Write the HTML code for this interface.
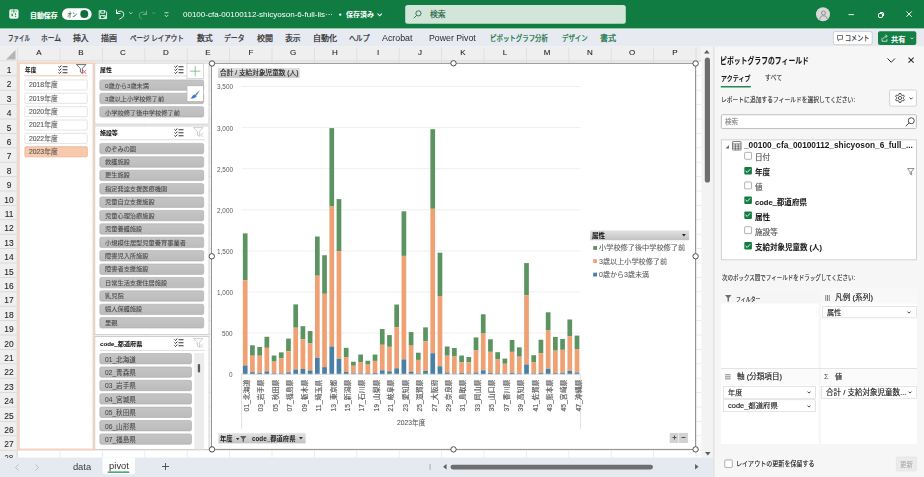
<!DOCTYPE html>
<html lang="ja"><head><meta charset="utf-8"><title>Excel - pivot</title>
<style>
html,body{margin:0;padding:0;background:#fff}
body{width:924px;height:477px;position:relative;overflow:hidden;font-family:"Liberation Sans",sans-serif}
#app{position:absolute;left:0;top:0;width:924px;height:477px;overflow:hidden;background:#fff}
.t{will-change:transform}
#app div{position:absolute;box-sizing:border-box}
#app svg{position:absolute;overflow:visible}
.t{white-space:nowrap}
.j{fill:currentColor;stroke:currentColor;stroke-width:4}
.jb{stroke-width:2}
.j text{font-family:"Liberation Sans","Noto Sans CJK JP",sans-serif}
.jb text{font-weight:bold}
</style></head><body>
<div id="app">
<svg id="shapes" style="left:0;top:0" width="924" height="477" viewBox="0 0 924 477"><defs><linearGradient id="lg0" x1="0" y1="0" x2="0" y2="1"><stop offset="0" stop-color="#C5C5C5"/><stop offset="1" stop-color="#BCBCBC"/></linearGradient><linearGradient id="lg1" x1="0" y1="0" x2="0" y2="1"><stop offset="0" stop-color="#E2E2E2"/><stop offset="1" stop-color="#C2C2C2"/></linearGradient></defs>
<rect x="0.00" y="0.00" width="924.00" height="28.70" fill="#107C41"/>
<rect x="62.00" y="8.20" width="29.60" height="11.90" rx="6.00" fill="#fff"/>
<rect x="80.30" y="10.10" width="8.00" height="8.00" rx="4.00" fill="#0E6F3A"/>
<rect x="339.00" y="13.40" width="2.40" height="2.40" rx="1.20" fill="#fff"/>
<rect x="405.20" y="5.00" width="220.60" height="18.80" rx="2.50" fill="#D2E5D9"/>
<rect x="816.00" y="7.30" width="14.00" height="14.00" rx="7.00" fill="#D9D9D9"/>
<rect x="848.50" y="14.20" width="5.50" height="0.90" fill="#fff"/>
<rect x="0.00" y="28.70" width="924.00" height="17.90" fill="#E7EAF1"/>
<rect x="0.00" y="28.80" width="924.00" height="0.90" fill="#E4F3EA"/>
<rect x="833.30" y="31.60" width="38.90" height="13.10" rx="1.70" fill="#fff" stroke="#b9b9b9" stroke-width="0.60"/>
<rect x="878.00" y="31.30" width="38.30" height="13.70" rx="2.00" fill="#137F44"/>
<rect x="0.00" y="46.60" width="701.50" height="14.80" fill="#EFEFEF"/>
<rect x="0.00" y="60.60" width="701.50" height="0.80" fill="#d0d0d0"/>
<rect x="0.00" y="61.40" width="17.60" height="396.10" fill="#EFEFEF"/>
<rect x="16.80" y="61.40" width="0.80" height="396.10" fill="#d0d0d0"/>
<rect x="17.20" y="47.60" width="0.80" height="13.80" fill="#dcdcdc"/>
<rect x="59.60" y="47.60" width="0.80" height="13.80" fill="#dcdcdc"/>
<rect x="102.00" y="47.60" width="0.80" height="13.80" fill="#dcdcdc"/>
<rect x="144.40" y="47.60" width="0.80" height="13.80" fill="#dcdcdc"/>
<rect x="186.80" y="47.60" width="0.80" height="13.80" fill="#dcdcdc"/>
<rect x="229.20" y="47.60" width="0.80" height="13.80" fill="#dcdcdc"/>
<rect x="271.60" y="47.60" width="0.80" height="13.80" fill="#dcdcdc"/>
<rect x="314.00" y="47.60" width="0.80" height="13.80" fill="#dcdcdc"/>
<rect x="356.40" y="47.60" width="0.80" height="13.80" fill="#dcdcdc"/>
<rect x="398.80" y="47.60" width="0.80" height="13.80" fill="#dcdcdc"/>
<rect x="441.20" y="47.60" width="0.80" height="13.80" fill="#dcdcdc"/>
<rect x="483.60" y="47.60" width="0.80" height="13.80" fill="#dcdcdc"/>
<rect x="526.00" y="47.60" width="0.80" height="13.80" fill="#dcdcdc"/>
<rect x="568.40" y="47.60" width="0.80" height="13.80" fill="#dcdcdc"/>
<rect x="610.80" y="47.60" width="0.80" height="13.80" fill="#dcdcdc"/>
<rect x="653.20" y="47.60" width="0.80" height="13.80" fill="#dcdcdc"/>
<rect x="695.60" y="47.60" width="0.80" height="13.80" fill="#d6d6d6"/>
<rect x="0.00" y="75.40" width="17.60" height="0.80" fill="#d6d6d6"/>
<rect x="0.00" y="89.80" width="17.60" height="0.80" fill="#d6d6d6"/>
<rect x="0.00" y="104.20" width="17.60" height="0.80" fill="#d6d6d6"/>
<rect x="0.00" y="118.60" width="17.60" height="0.80" fill="#d6d6d6"/>
<rect x="0.00" y="133.00" width="17.60" height="0.80" fill="#d6d6d6"/>
<rect x="0.00" y="147.40" width="17.60" height="0.80" fill="#d6d6d6"/>
<rect x="0.00" y="161.80" width="17.60" height="0.80" fill="#d6d6d6"/>
<rect x="0.00" y="176.20" width="17.60" height="0.80" fill="#d6d6d6"/>
<rect x="0.00" y="190.60" width="17.60" height="0.80" fill="#d6d6d6"/>
<rect x="0.00" y="205.00" width="17.60" height="0.80" fill="#d6d6d6"/>
<rect x="0.00" y="219.40" width="17.60" height="0.80" fill="#d6d6d6"/>
<rect x="0.00" y="233.80" width="17.60" height="0.80" fill="#d6d6d6"/>
<rect x="0.00" y="248.20" width="17.60" height="0.80" fill="#d6d6d6"/>
<rect x="0.00" y="262.60" width="17.60" height="0.80" fill="#d6d6d6"/>
<rect x="0.00" y="277.00" width="17.60" height="0.80" fill="#d6d6d6"/>
<rect x="0.00" y="291.40" width="17.60" height="0.80" fill="#d6d6d6"/>
<rect x="0.00" y="305.80" width="17.60" height="0.80" fill="#d6d6d6"/>
<rect x="0.00" y="320.20" width="17.60" height="0.80" fill="#d6d6d6"/>
<rect x="0.00" y="334.60" width="17.60" height="0.80" fill="#d6d6d6"/>
<rect x="0.00" y="349.00" width="17.60" height="0.80" fill="#d6d6d6"/>
<rect x="0.00" y="363.40" width="17.60" height="0.80" fill="#d6d6d6"/>
<rect x="0.00" y="377.80" width="17.60" height="0.80" fill="#d6d6d6"/>
<rect x="0.00" y="392.20" width="17.60" height="0.80" fill="#d6d6d6"/>
<rect x="0.00" y="406.60" width="17.60" height="0.80" fill="#d6d6d6"/>
<rect x="0.00" y="421.00" width="17.60" height="0.80" fill="#d6d6d6"/>
<rect x="0.00" y="435.40" width="17.60" height="0.80" fill="#d6d6d6"/>
<rect x="0.00" y="449.80" width="17.60" height="0.80" fill="#d6d6d6"/>
<rect x="0.00" y="464.20" width="17.60" height="0.80" fill="#d6d6d6"/>
<rect x="17.60" y="75.40" width="683.90" height="0.80" fill="#E8E8E8"/>
<rect x="17.60" y="89.80" width="683.90" height="0.80" fill="#E8E8E8"/>
<rect x="17.60" y="104.20" width="683.90" height="0.80" fill="#E8E8E8"/>
<rect x="17.60" y="118.60" width="683.90" height="0.80" fill="#E8E8E8"/>
<rect x="17.60" y="133.00" width="683.90" height="0.80" fill="#E8E8E8"/>
<rect x="17.60" y="147.40" width="683.90" height="0.80" fill="#E8E8E8"/>
<rect x="17.60" y="161.80" width="683.90" height="0.80" fill="#E8E8E8"/>
<rect x="17.60" y="176.20" width="683.90" height="0.80" fill="#E8E8E8"/>
<rect x="17.60" y="190.60" width="683.90" height="0.80" fill="#E8E8E8"/>
<rect x="17.60" y="205.00" width="683.90" height="0.80" fill="#E8E8E8"/>
<rect x="17.60" y="219.40" width="683.90" height="0.80" fill="#E8E8E8"/>
<rect x="17.60" y="233.80" width="683.90" height="0.80" fill="#E8E8E8"/>
<rect x="17.60" y="248.20" width="683.90" height="0.80" fill="#E8E8E8"/>
<rect x="17.60" y="262.60" width="683.90" height="0.80" fill="#E8E8E8"/>
<rect x="17.60" y="277.00" width="683.90" height="0.80" fill="#E8E8E8"/>
<rect x="17.60" y="291.40" width="683.90" height="0.80" fill="#E8E8E8"/>
<rect x="17.60" y="305.80" width="683.90" height="0.80" fill="#E8E8E8"/>
<rect x="17.60" y="320.20" width="683.90" height="0.80" fill="#E8E8E8"/>
<rect x="17.60" y="334.60" width="683.90" height="0.80" fill="#E8E8E8"/>
<rect x="17.60" y="349.00" width="683.90" height="0.80" fill="#E8E8E8"/>
<rect x="17.60" y="363.40" width="683.90" height="0.80" fill="#E8E8E8"/>
<rect x="17.60" y="377.80" width="683.90" height="0.80" fill="#E8E8E8"/>
<rect x="17.60" y="392.20" width="683.90" height="0.80" fill="#E8E8E8"/>
<rect x="17.60" y="406.60" width="683.90" height="0.80" fill="#E8E8E8"/>
<rect x="17.60" y="421.00" width="683.90" height="0.80" fill="#E8E8E8"/>
<rect x="17.60" y="435.40" width="683.90" height="0.80" fill="#E8E8E8"/>
<rect x="17.60" y="449.80" width="683.90" height="0.80" fill="#E8E8E8"/>
<rect x="59.60" y="61.40" width="0.80" height="396.10" fill="#E8E8E8"/>
<rect x="102.00" y="61.40" width="0.80" height="396.10" fill="#E8E8E8"/>
<rect x="144.40" y="61.40" width="0.80" height="396.10" fill="#E8E8E8"/>
<rect x="186.80" y="61.40" width="0.80" height="396.10" fill="#E8E8E8"/>
<rect x="229.20" y="61.40" width="0.80" height="396.10" fill="#E8E8E8"/>
<rect x="271.60" y="61.40" width="0.80" height="396.10" fill="#E8E8E8"/>
<rect x="314.00" y="61.40" width="0.80" height="396.10" fill="#E8E8E8"/>
<rect x="356.40" y="61.40" width="0.80" height="396.10" fill="#E8E8E8"/>
<rect x="398.80" y="61.40" width="0.80" height="396.10" fill="#E8E8E8"/>
<rect x="441.20" y="61.40" width="0.80" height="396.10" fill="#E8E8E8"/>
<rect x="483.60" y="61.40" width="0.80" height="396.10" fill="#E8E8E8"/>
<rect x="526.00" y="61.40" width="0.80" height="396.10" fill="#E8E8E8"/>
<rect x="568.40" y="61.40" width="0.80" height="396.10" fill="#E8E8E8"/>
<rect x="610.80" y="61.40" width="0.80" height="396.10" fill="#E8E8E8"/>
<rect x="653.20" y="61.40" width="0.80" height="396.10" fill="#E8E8E8"/>
<rect x="695.60" y="61.40" width="0.80" height="396.10" fill="#E8E8E8"/>
<rect x="18.75" y="63.15" width="74.70" height="386.30" fill="#fff" stroke="#F7D2BF" stroke-width="1.90"/>
<rect x="24.30" y="75.20" width="63.40" height="1.10" fill="#F5C6AC"/>
<rect x="24.90" y="79.90" width="62.40" height="10.10" rx="1.10" fill="#fff" stroke="#dedede" stroke-width="0.80"/>
<rect x="24.90" y="93.27" width="62.40" height="10.10" rx="1.10" fill="#fff" stroke="#dedede" stroke-width="0.80"/>
<rect x="24.90" y="106.64" width="62.40" height="10.10" rx="1.10" fill="#fff" stroke="#dedede" stroke-width="0.80"/>
<rect x="24.90" y="120.01" width="62.40" height="10.10" rx="1.10" fill="#fff" stroke="#dedede" stroke-width="0.80"/>
<rect x="24.90" y="133.38" width="62.40" height="10.10" rx="1.10" fill="#fff" stroke="#dedede" stroke-width="0.80"/>
<rect x="24.90" y="146.75" width="62.40" height="10.10" rx="1.10" fill="#F8C9AC" stroke="#EDB08C" stroke-width="0.80"/>
<rect x="94.75" y="63.05" width="114.30" height="61.10" fill="#fff" stroke="#c9c9c9" stroke-width="0.90"/>
<rect x="94.75" y="125.95" width="114.30" height="208.70" fill="#fff" stroke="#c9c9c9" stroke-width="0.90"/>
<rect x="94.75" y="336.45" width="114.30" height="113.10" fill="#fff" stroke="#c9c9c9" stroke-width="0.90"/>
<rect x="100.00" y="75.60" width="104.50" height="0.80" fill="#d4d4d4"/>
<rect x="99.80" y="79.90" width="103.90" height="10.40" rx="1.70" fill="url(#lg0)" stroke="#ababab" stroke-width="0.60"/>
<rect x="99.80" y="93.27" width="103.90" height="10.40" rx="1.70" fill="url(#lg0)" stroke="#ababab" stroke-width="0.60"/>
<rect x="99.80" y="106.64" width="103.90" height="10.40" rx="1.70" fill="url(#lg0)" stroke="#ababab" stroke-width="0.60"/>
<rect x="186.95" y="63.55" width="16.40" height="15.10" fill="#fff" stroke="#c9c9c9" stroke-width="0.70"/>
<rect x="186.95" y="85.75" width="16.40" height="15.90" fill="#fff" stroke="#b0b0b0" stroke-width="0.70"/>
<rect x="100.00" y="139.40" width="104.50" height="0.80" fill="#d4d4d4"/>
<rect x="99.80" y="143.40" width="103.90" height="10.40" rx="1.70" fill="url(#lg0)" stroke="#ababab" stroke-width="0.60"/>
<rect x="99.80" y="156.80" width="103.90" height="10.40" rx="1.70" fill="url(#lg0)" stroke="#ababab" stroke-width="0.60"/>
<rect x="99.80" y="170.20" width="103.90" height="10.40" rx="1.70" fill="url(#lg0)" stroke="#ababab" stroke-width="0.60"/>
<rect x="99.80" y="183.60" width="103.90" height="10.40" rx="1.70" fill="url(#lg0)" stroke="#ababab" stroke-width="0.60"/>
<rect x="99.80" y="197.00" width="103.90" height="10.40" rx="1.70" fill="url(#lg0)" stroke="#ababab" stroke-width="0.60"/>
<rect x="99.80" y="210.40" width="103.90" height="10.40" rx="1.70" fill="url(#lg0)" stroke="#ababab" stroke-width="0.60"/>
<rect x="99.80" y="223.80" width="103.90" height="10.40" rx="1.70" fill="url(#lg0)" stroke="#ababab" stroke-width="0.60"/>
<rect x="99.80" y="237.20" width="103.90" height="10.40" rx="1.70" fill="url(#lg0)" stroke="#ababab" stroke-width="0.60"/>
<rect x="99.80" y="250.60" width="103.90" height="10.40" rx="1.70" fill="url(#lg0)" stroke="#ababab" stroke-width="0.60"/>
<rect x="99.80" y="264.00" width="103.90" height="10.40" rx="1.70" fill="url(#lg0)" stroke="#ababab" stroke-width="0.60"/>
<rect x="99.80" y="277.40" width="103.90" height="10.40" rx="1.70" fill="url(#lg0)" stroke="#ababab" stroke-width="0.60"/>
<rect x="99.80" y="290.80" width="103.90" height="10.40" rx="1.70" fill="url(#lg0)" stroke="#ababab" stroke-width="0.60"/>
<rect x="99.80" y="304.20" width="103.90" height="10.40" rx="1.70" fill="url(#lg0)" stroke="#ababab" stroke-width="0.60"/>
<rect x="99.80" y="317.60" width="103.90" height="10.40" rx="1.70" fill="url(#lg0)" stroke="#ababab" stroke-width="0.60"/>
<rect x="100.00" y="349.90" width="104.50" height="0.80" fill="#d4d4d4"/>
<rect x="194.30" y="353.00" width="9.80" height="96.30" fill="#ECECEC"/>
<rect x="197.80" y="364.00" width="2.30" height="8.40" rx="1.00" fill="#5a5a5a"/>
<rect x="99.80" y="353.50" width="91.70" height="10.40" rx="1.70" fill="url(#lg0)" stroke="#ababab" stroke-width="0.60"/>
<rect x="99.80" y="366.90" width="91.70" height="10.40" rx="1.70" fill="url(#lg0)" stroke="#ababab" stroke-width="0.60"/>
<rect x="99.80" y="380.30" width="91.70" height="10.40" rx="1.70" fill="url(#lg0)" stroke="#ababab" stroke-width="0.60"/>
<rect x="99.80" y="393.70" width="91.70" height="10.40" rx="1.70" fill="url(#lg0)" stroke="#ababab" stroke-width="0.60"/>
<rect x="99.80" y="407.10" width="91.70" height="10.40" rx="1.70" fill="url(#lg0)" stroke="#ababab" stroke-width="0.60"/>
<rect x="99.80" y="420.50" width="91.70" height="10.40" rx="1.70" fill="url(#lg0)" stroke="#ababab" stroke-width="0.60"/>
<rect x="99.80" y="433.90" width="91.70" height="10.40" rx="1.70" fill="url(#lg0)" stroke="#ababab" stroke-width="0.60"/>
<rect x="211.40" y="63.30" width="484.20" height="386.10" fill="#fff" stroke="#8a8a8a" stroke-width="1.00"/>
<rect x="218.00" y="68.00" width="81.60" height="9.80" fill="url(#lg1)"/>
<rect x="218.40" y="433.20" width="30.70" height="10.20" fill="url(#lg1)"/>
<rect x="249.10" y="433.20" width="56.50" height="10.20" fill="url(#lg1)"/>
<rect x="590.20" y="230.40" width="99.00" height="9.80" fill="url(#lg1)"/>
<rect x="593.20" y="246.10" width="3.80" height="3.80" fill="#5C9461"/>
<rect x="593.20" y="259.20" width="3.80" height="3.80" fill="#EFA173"/>
<rect x="593.20" y="272.70" width="3.80" height="3.80" fill="#4A80A6"/>
<rect x="669.70" y="432.90" width="8.80" height="10.10" fill="#D2D2D2"/>
<rect x="679.10" y="432.90" width="8.80" height="10.10" fill="#D2D2D2"/>
<rect x="209.30" y="60.80" width="5.40" height="5.40" rx="2.70" fill="#fff" stroke="#4d4d4d" stroke-width="1.00"/>
<rect x="450.80" y="60.60" width="5.40" height="5.40" rx="2.70" fill="#fff" stroke="#4d4d4d" stroke-width="1.00"/>
<rect x="692.90" y="60.80" width="5.40" height="5.40" rx="2.70" fill="#fff" stroke="#4d4d4d" stroke-width="1.00"/>
<rect x="209.10" y="253.60" width="5.40" height="5.40" rx="2.70" fill="#fff" stroke="#4d4d4d" stroke-width="1.00"/>
<rect x="692.90" y="253.60" width="5.40" height="5.40" rx="2.70" fill="#fff" stroke="#4d4d4d" stroke-width="1.00"/>
<rect x="209.30" y="446.70" width="5.40" height="5.40" rx="2.70" fill="#fff" stroke="#4d4d4d" stroke-width="1.00"/>
<rect x="450.80" y="446.70" width="5.40" height="5.40" rx="2.70" fill="#fff" stroke="#4d4d4d" stroke-width="1.00"/>
<rect x="692.90" y="446.70" width="5.40" height="5.40" rx="2.70" fill="#fff" stroke="#4d4d4d" stroke-width="1.00"/>
<rect x="701.50" y="46.60" width="12.00" height="411.00" fill="#F3F3F3"/>
<rect x="704.80" y="57.60" width="5.20" height="125.00" rx="2.60" fill="#6E6E6E"/>
<rect x="0.00" y="457.50" width="713.50" height="19.50" fill="#E5E9F0"/>
<path d="M102.60 457.50h32.40v13.80a3.00 3.00 0 0 1 -3.00 3.00h-26.40a3.00 3.00 0 0 1 -3.00 -3.00z" fill="#fff"/>
<rect x="107.60" y="471.60" width="21.80" height="1.20" rx="0.60" fill="#1E8A4C"/>
<rect x="429.60" y="464.60" width="0.90" height="0.90" fill="#555"/>
<rect x="429.60" y="466.60" width="0.90" height="0.90" fill="#555"/>
<rect x="429.60" y="468.60" width="0.90" height="0.90" fill="#555"/>
<rect x="450.50" y="464.70" width="202.50" height="4.80" rx="2.40" fill="#6E6E6E"/>
<rect x="713.50" y="46.60" width="210.50" height="430.40" fill="#F6F6F6"/>
<rect x="713.50" y="46.60" width="0.80" height="430.40" fill="#d2d2d2"/>
<rect x="720.60" y="86.00" width="30.40" height="1.40" rx="0.70" fill="#1E8A4C"/>
<rect x="889.55" y="90.05" width="26.90" height="16.10" rx="1.15" fill="#fff" stroke="#c4c4c4" stroke-width="0.70"/>
<rect x="721.35" y="114.75" width="195.00" height="13.80" rx="1.05" fill="#fff" stroke="#b8b8b8" stroke-width="0.90"/>
<rect x="721.30" y="139.90" width="195.10" height="119.90" fill="#fff" stroke="#c8c8c8" stroke-width="0.80"/>
<rect x="744.65" y="152.35" width="6.90" height="6.90" rx="0.65" fill="#fff" stroke="#8f8f8f" stroke-width="0.70"/>
<rect x="744.30" y="167.00" width="7.60" height="7.60" rx="1.00" fill="#107C41"/>
<rect x="744.65" y="181.95" width="6.90" height="6.90" rx="0.65" fill="#fff" stroke="#8f8f8f" stroke-width="0.70"/>
<rect x="744.30" y="196.40" width="7.60" height="7.60" rx="1.00" fill="#107C41"/>
<rect x="744.30" y="211.40" width="7.60" height="7.60" rx="1.00" fill="#107C41"/>
<rect x="744.65" y="226.75" width="6.90" height="6.90" rx="0.65" fill="#fff" stroke="#8f8f8f" stroke-width="0.70"/>
<rect x="744.30" y="242.00" width="7.60" height="7.60" rx="1.00" fill="#107C41"/>
<rect x="720.90" y="288.50" width="97.80" height="155.50" fill="#fff"/>
<rect x="820.80" y="288.50" width="96.00" height="155.50" fill="#fff"/>
<rect x="720.90" y="368.20" width="195.90" height="0.90" fill="#dedede"/>
<rect x="720.90" y="288.50" width="97.80" height="15.00" fill="#F6F6F6"/>
<rect x="820.80" y="288.50" width="96.00" height="15.00" fill="#F8F8F8"/>
<rect x="822.65" y="306.55" width="93.70" height="11.30" fill="#fff" stroke="#dadada" stroke-width="0.70"/>
<rect x="720.90" y="369.10" width="97.80" height="16.00" fill="#FBFBFB"/>
<rect x="820.80" y="369.10" width="96.00" height="16.00" fill="#FBFBFB"/>
<rect x="723.55" y="386.35" width="91.90" height="11.90" fill="#fff" stroke="#dadada" stroke-width="0.70"/>
<rect x="723.55" y="399.75" width="91.90" height="11.90" fill="#fff" stroke="#dadada" stroke-width="0.70"/>
<rect x="821.55" y="386.35" width="94.90" height="11.90" fill="#fff" stroke="#dadada" stroke-width="0.70"/>
<rect x="724.75" y="459.95" width="7.50" height="7.50" rx="0.65" fill="#fff" stroke="#8f8f8f" stroke-width="0.70"/>
<rect x="896.30" y="457.00" width="20.20" height="14.00" rx="1.20" fill="#EBEBEB" stroke="#e0e0e0" stroke-width="0.60"/>
</svg>
<svg style="left:9.2px;top:9.2px" width="9.800" height="10" viewBox="0 0 20 20">
<rect x="0.500" y="0.500" width="19" height="19" rx="3.500" fill="#fff" opacity="0.930"/>
<path d="M10 1v6" stroke="#107C41" stroke-width="2"/><path d="M5 9.500l3 5M8 9.500l-3 5" stroke="#107C41" stroke-width="1.600"/>
<rect x="12" y="8.500" width="2.500" height="3" fill="#107C41"/><rect x="12" y="13.500" width="2.500" height="3" fill="#107C41" opacity="0.700"/>
<rect x="4" y="3" width="3.500" height="2" fill="#107C41" opacity="0.600"/><rect x="13" y="3" width="3.500" height="2" fill="#107C41" opacity="0.600"/></svg>
<svg class="j jb" style="left:29.70px;top:11.55px;color:#fff;stroke-width:4" width="27.60" height="7.10" viewBox="0 -176 777.5 200" role="img" aria-label="自動保存"><text x="0" y="0" font-size="194" textLength="777.5" lengthAdjust="spacingAndGlyphs">自動保存</text></svg>
<svg class="j" style="left:66.70px;top:10.90px;color:#0b5a2e" width="10.00" height="6.60" viewBox="0 -176 303.0 200" role="img" aria-label="オン"><text x="0" y="0" font-size="190" textLength="303" lengthAdjust="spacingAndGlyphs">オン</text></svg>
<svg style="left:98.4px;top:9.6px" width="9.8" height="9.8" viewBox="0 0 20 20" fill="none" stroke="#fff" stroke-width="1.8">
<path d="M2.5 1.5h12l3 3v13h-15z"/><path d="M5.5 1.5v5h8v-5M5 17.5v-6h10v6"/><path d="M11 13l3 2-3 2" stroke-width="1.4"/></svg>
<svg style="left:115px;top:9.3px" width="10" height="11" viewBox="0 0 20 22" fill="none" stroke="#fff" stroke-width="2" stroke-linecap="round" stroke-linejoin="round">
<path d="M3 2v7h7"/><path d="M3 9c3-5 9-6 12.500-3c3.500 3.500 2 9-2 11.500l-4 2.500"/></svg>
<svg style="left:128.8px;top:12.4px" width="3.6" height="2.4" viewBox="0 0 6 4" fill="none" stroke="#fff" stroke-width="1.2"><path d="M.5.5l2.500 2.500 2.500-2.500"/></svg>
<svg style="left:138.4px;top:9.8px;opacity:.38" width="10" height="10" viewBox="0 0 20 20" fill="none" stroke="#fff" stroke-width="2" stroke-linecap="round" stroke-linejoin="round">
<path d="M17 2v7h-7"/><path d="M17 9c-3-5-9-6-12.500-3c-3.500 3.500-2 9 2 11.500"/></svg>
<svg style="left:152.1px;top:12.4px;opacity:.38" width="3.6" height="2.400" viewBox="0 0 6 4" fill="none" stroke="#fff" stroke-width="1.200"><path d="M.5.5l2.500 2.500 2.500-2.500"/></svg>
<svg style="left:163.5px;top:11.5px" width="5" height="6" viewBox="0 0 10 12" fill="none" stroke="#fff" stroke-width="1.500"><path d="M1 1.500h8M1.500 6l3.500 3.500 3.500-3.500"/></svg>
<div class="t" style="top:9.78px;font-size:8.03px;line-height:9.64px;color:#fff;left:183.20px;">00100-cfa-00100112-shicyoson-6-full-lis···</div>
<svg class="j jb" style="left:346.00px;top:10.90px;color:#fff;stroke-width:0" width="28.00" height="7.20" viewBox="0 -176 777.8 200" role="img" aria-label="保存済み"><text x="0" y="0" font-size="205" textLength="777.8" lengthAdjust="spacingAndGlyphs">保存済み</text></svg>
<svg style="left:377.3px;top:13px" width="5.400" height="3.400" viewBox="0 0 10 6" fill="none" stroke="#fff" stroke-width="1.900"><path d="M1 1l4 4 4-4"/></svg>
<svg style="left:413.3px;top:9.6px" width="8.800" height="8.800" viewBox="0 0 17 17" fill="none" stroke="#1e5c38" stroke-width="1.600"><circle cx="10.500" cy="6.500" r="5"/><path d="M7 10.500l-5.500 5.500"/></svg>
<svg class="j" style="left:429.80px;top:10.40px;color:#225b3a" width="15.70" height="7.80" viewBox="0 -176 402.6 200" role="img" aria-label="検索"><text x="0" y="0" font-size="201" textLength="402.6" lengthAdjust="spacingAndGlyphs">検索</text></svg>
<svg style="left:818.5px;top:9.5px" width="9" height="10" viewBox="0 0 18 20" fill="none" stroke="#8a8a8a" stroke-width="1.800"><circle cx="9" cy="6" r="4"/><path d="M1.500 19c0-5 3-7.500 7.500-7.500s7.500 2.500 7.500 7.500"/></svg>
<svg style="left:877.6px;top:11.5px" width="6" height="6" viewBox="0 0 13 13" fill="none" stroke="#fff" stroke-width="2.200"><rect x="1.200" y="3.300" width="8.500" height="8.500" rx="2.500"/><path d="M4.500 1h4.500a3 3 0 0 1 3 3v4.500"/></svg>
<svg style="left:906.4px;top:11.4px" width="6.200" height="6.200" viewBox="0 0 13 13" fill="none" stroke="#fff" stroke-width="2.100"><path d="M1 1l11 11M12 1l-11 11"/></svg>
<svg class="j" style="left:7.50px;top:34.30px;color:#2b2b2b;stroke-width:6" width="22.00" height="8.20" viewBox="0 -176 536.6 200" role="img" aria-label="ファイル"><text x="0" y="0" font-size="195" textLength="536.6" lengthAdjust="spacingAndGlyphs">ファイル</text></svg>
<svg class="j" style="left:40.75px;top:34.30px;color:#2b2b2b;stroke-width:6" width="20.00" height="8.20" viewBox="0 -176 487.8 200" role="img" aria-label="ホーム"><text x="0" y="0" font-size="195" textLength="487.8" lengthAdjust="spacingAndGlyphs">ホーム</text></svg>
<svg class="j" style="left:72.50px;top:34.30px;color:#2b2b2b;stroke-width:6" width="15.75" height="8.20" viewBox="0 -176 384.1 200" role="img" aria-label="挿入"><text x="0" y="0" font-size="192" textLength="384.1" lengthAdjust="spacingAndGlyphs">挿入</text></svg>
<svg class="j" style="left:100.75px;top:34.30px;color:#2b2b2b;stroke-width:6" width="16.00" height="8.20" viewBox="0 -176 390.2 200" role="img" aria-label="描画"><text x="0" y="0" font-size="195" textLength="390.2" lengthAdjust="spacingAndGlyphs">描画</text></svg>
<svg class="j" style="left:129.50px;top:34.30px;color:#2b2b2b;stroke-width:6" width="53.75" height="8.20" viewBox="0 -176 1311.0 200" role="img" aria-label="ページ レイアウト"><text x="0" y="0" font-size="195" textLength="1311" lengthAdjust="spacingAndGlyphs">ページ レイアウト</text></svg>
<svg class="j" style="left:196.75px;top:34.30px;color:#2b2b2b;stroke-width:6" width="15.75" height="8.20" viewBox="0 -176 384.1 200" role="img" aria-label="数式"><text x="0" y="0" font-size="192" textLength="384.1" lengthAdjust="spacingAndGlyphs">数式</text></svg>
<svg class="j" style="left:224.25px;top:34.30px;color:#2b2b2b;stroke-width:6" width="20.50" height="8.20" viewBox="0 -176 500.0 200" role="img" aria-label="データ"><text x="0" y="0" font-size="195" textLength="500" lengthAdjust="spacingAndGlyphs">データ</text></svg>
<svg class="j" style="left:256.75px;top:34.30px;color:#2b2b2b;stroke-width:6" width="16.00" height="8.20" viewBox="0 -176 390.2 200" role="img" aria-label="校閲"><text x="0" y="0" font-size="195" textLength="390.2" lengthAdjust="spacingAndGlyphs">校閲</text></svg>
<svg class="j" style="left:284.75px;top:34.30px;color:#2b2b2b;stroke-width:6" width="15.75" height="8.20" viewBox="0 -176 384.1 200" role="img" aria-label="表示"><text x="0" y="0" font-size="192" textLength="384.1" lengthAdjust="spacingAndGlyphs">表示</text></svg>
<svg class="j" style="left:312.75px;top:34.30px;color:#2b2b2b;stroke-width:6" width="24.00" height="8.20" viewBox="0 -176 585.4 200" role="img" aria-label="自動化"><text x="0" y="0" font-size="195" textLength="585.4" lengthAdjust="spacingAndGlyphs">自動化</text></svg>
<svg class="j" style="left:348.50px;top:34.30px;color:#2b2b2b;stroke-width:6" width="20.50" height="8.20" viewBox="0 -176 500.0 200" role="img" aria-label="ヘルプ"><text x="0" y="0" font-size="195" textLength="500" lengthAdjust="spacingAndGlyphs">ヘルプ</text></svg>
<div class="t" style="top:32.89px;font-size:8.85px;line-height:10.62px;color:#2b2b2b;left:382.20px;">Acrobat</div>
<div class="t" style="top:32.94px;font-size:8.76px;line-height:10.51px;color:#2b2b2b;left:429.00px;">Power Pivot</div>
<svg class="j" style="left:490.25px;top:34.30px;color:#0f703b;stroke-width:6" width="58.00" height="8.20" viewBox="0 -176 1414.6 200" role="img" aria-label="ピボットグラフ分析"><text x="0" y="0" font-size="186" textLength="1414.6" lengthAdjust="spacingAndGlyphs">ピボットグラフ分析</text></svg>
<svg class="j" style="left:562.00px;top:34.30px;color:#0f703b;stroke-width:6" width="25.75" height="8.20" viewBox="0 -176 628.0 200" role="img" aria-label="デザイン"><text x="0" y="0" font-size="195" textLength="628" lengthAdjust="spacingAndGlyphs">デザイン</text></svg>
<svg class="j" style="left:600.00px;top:34.30px;color:#0f703b;stroke-width:6" width="16.25" height="8.20" viewBox="0 -176 396.3 200" role="img" aria-label="書式"><text x="0" y="0" font-size="198" textLength="396.3" lengthAdjust="spacingAndGlyphs">書式</text></svg>
<svg style="left:836.6px;top:34.6px" width="6" height="6.500" viewBox="0 0 12 13" fill="none" stroke="#333" stroke-width="1.300"><path d="M1 1h10v7.500h-6l-2.500 3v-3h-1.500z"/></svg>
<svg class="j" style="left:845.20px;top:34.30px;color:#222" width="24.40" height="8.00" viewBox="0 -176 610.0 200" role="img" aria-label="コメント"><text x="0" y="0" font-size="190" textLength="610" lengthAdjust="spacingAndGlyphs">コメント</text></svg>
<svg style="left:881.2px;top:33.8px" width="7.500" height="8" viewBox="0 0 15 16" fill="none" stroke="#fff" stroke-width="1.400"><path d="M2 8v6.500h10v-4"/><path d="M5 9.500c.5-3.500 3-5 6-5M9 1.500l3.500 3-3.500 3"/></svg>
<svg class="j jb" style="left:891.40px;top:34.50px;color:#fff" width="14.60" height="7.60" viewBox="0 -176 384.2 200" role="img" aria-label="共有"><text x="0" y="0" font-size="192" textLength="384.2" lengthAdjust="spacingAndGlyphs">共有</text></svg>
<svg style="left:910.3px;top:37.4px" width="4" height="2.600" viewBox="0 0 8 5" fill="none" stroke="#fff" stroke-width="1.400"><path d="M1 1l3 3 3-3"/></svg>
<svg style="left:6.3px;top:49.7px" width="9.500" height="9.500" viewBox="0 0 10 10"><path d="M10 0v10h-10z" fill="#b5b5b5"/></svg>
<div class="t" style="top:48.20px;font-size:8.00px;line-height:9.60px;color:#262626;left:38.50px;width:80px;margin-left:-40px;text-align:center;-webkit-text-stroke:0.100px #262626;">A</div>
<div class="t" style="top:48.20px;font-size:8.00px;line-height:9.60px;color:#262626;left:80.90px;width:80px;margin-left:-40px;text-align:center;-webkit-text-stroke:0.100px #262626;">B</div>
<div class="t" style="top:48.20px;font-size:8.00px;line-height:9.60px;color:#262626;left:123.30px;width:80px;margin-left:-40px;text-align:center;-webkit-text-stroke:0.100px #262626;">C</div>
<div class="t" style="top:48.20px;font-size:8.00px;line-height:9.60px;color:#262626;left:165.70px;width:80px;margin-left:-40px;text-align:center;-webkit-text-stroke:0.100px #262626;">D</div>
<div class="t" style="top:48.20px;font-size:8.00px;line-height:9.60px;color:#262626;left:208.10px;width:80px;margin-left:-40px;text-align:center;-webkit-text-stroke:0.100px #262626;">E</div>
<div class="t" style="top:48.20px;font-size:8.00px;line-height:9.60px;color:#262626;left:250.50px;width:80px;margin-left:-40px;text-align:center;-webkit-text-stroke:0.100px #262626;">F</div>
<div class="t" style="top:48.20px;font-size:8.00px;line-height:9.60px;color:#262626;left:292.90px;width:80px;margin-left:-40px;text-align:center;-webkit-text-stroke:0.100px #262626;">G</div>
<div class="t" style="top:48.20px;font-size:8.00px;line-height:9.60px;color:#262626;left:335.30px;width:80px;margin-left:-40px;text-align:center;-webkit-text-stroke:0.100px #262626;">H</div>
<div class="t" style="top:48.20px;font-size:8.00px;line-height:9.60px;color:#262626;left:377.70px;width:80px;margin-left:-40px;text-align:center;-webkit-text-stroke:0.100px #262626;">I</div>
<div class="t" style="top:48.20px;font-size:8.00px;line-height:9.60px;color:#262626;left:420.10px;width:80px;margin-left:-40px;text-align:center;-webkit-text-stroke:0.100px #262626;">J</div>
<div class="t" style="top:48.20px;font-size:8.00px;line-height:9.60px;color:#262626;left:462.50px;width:80px;margin-left:-40px;text-align:center;-webkit-text-stroke:0.100px #262626;">K</div>
<div class="t" style="top:48.20px;font-size:8.00px;line-height:9.60px;color:#262626;left:504.90px;width:80px;margin-left:-40px;text-align:center;-webkit-text-stroke:0.100px #262626;">L</div>
<div class="t" style="top:48.20px;font-size:8.00px;line-height:9.60px;color:#262626;left:547.30px;width:80px;margin-left:-40px;text-align:center;-webkit-text-stroke:0.100px #262626;">M</div>
<div class="t" style="top:48.20px;font-size:8.00px;line-height:9.60px;color:#262626;left:589.70px;width:80px;margin-left:-40px;text-align:center;-webkit-text-stroke:0.100px #262626;">N</div>
<div class="t" style="top:48.20px;font-size:8.00px;line-height:9.60px;color:#262626;left:632.10px;width:80px;margin-left:-40px;text-align:center;-webkit-text-stroke:0.100px #262626;">O</div>
<div class="t" style="top:48.20px;font-size:8.00px;line-height:9.60px;color:#262626;left:674.50px;width:80px;margin-left:-40px;text-align:center;-webkit-text-stroke:0.100px #262626;">P</div>
<div class="t" style="top:65.06px;font-size:8.40px;line-height:10.08px;color:#262626;left:8.70px;width:80px;margin-left:-40px;text-align:center;-webkit-text-stroke:0.100px #262626;">1</div>
<div class="t" style="top:79.46px;font-size:8.40px;line-height:10.08px;color:#262626;left:8.70px;width:80px;margin-left:-40px;text-align:center;-webkit-text-stroke:0.100px #262626;">2</div>
<div class="t" style="top:93.86px;font-size:8.40px;line-height:10.08px;color:#262626;left:8.70px;width:80px;margin-left:-40px;text-align:center;-webkit-text-stroke:0.100px #262626;">3</div>
<div class="t" style="top:108.26px;font-size:8.40px;line-height:10.08px;color:#262626;left:8.70px;width:80px;margin-left:-40px;text-align:center;-webkit-text-stroke:0.100px #262626;">4</div>
<div class="t" style="top:122.66px;font-size:8.40px;line-height:10.08px;color:#262626;left:8.70px;width:80px;margin-left:-40px;text-align:center;-webkit-text-stroke:0.100px #262626;">5</div>
<div class="t" style="top:137.06px;font-size:8.40px;line-height:10.08px;color:#262626;left:8.70px;width:80px;margin-left:-40px;text-align:center;-webkit-text-stroke:0.100px #262626;">6</div>
<div class="t" style="top:151.46px;font-size:8.40px;line-height:10.08px;color:#262626;left:8.70px;width:80px;margin-left:-40px;text-align:center;-webkit-text-stroke:0.100px #262626;">7</div>
<div class="t" style="top:165.86px;font-size:8.40px;line-height:10.08px;color:#262626;left:8.70px;width:80px;margin-left:-40px;text-align:center;-webkit-text-stroke:0.100px #262626;">8</div>
<div class="t" style="top:180.26px;font-size:8.40px;line-height:10.08px;color:#262626;left:8.70px;width:80px;margin-left:-40px;text-align:center;-webkit-text-stroke:0.100px #262626;">9</div>
<div class="t" style="top:194.66px;font-size:8.40px;line-height:10.08px;color:#262626;left:8.70px;width:80px;margin-left:-40px;text-align:center;-webkit-text-stroke:0.100px #262626;">10</div>
<div class="t" style="top:209.06px;font-size:8.40px;line-height:10.08px;color:#262626;left:8.70px;width:80px;margin-left:-40px;text-align:center;-webkit-text-stroke:0.100px #262626;">11</div>
<div class="t" style="top:223.46px;font-size:8.40px;line-height:10.08px;color:#262626;left:8.70px;width:80px;margin-left:-40px;text-align:center;-webkit-text-stroke:0.100px #262626;">12</div>
<div class="t" style="top:237.86px;font-size:8.40px;line-height:10.08px;color:#262626;left:8.70px;width:80px;margin-left:-40px;text-align:center;-webkit-text-stroke:0.100px #262626;">13</div>
<div class="t" style="top:252.26px;font-size:8.40px;line-height:10.08px;color:#262626;left:8.70px;width:80px;margin-left:-40px;text-align:center;-webkit-text-stroke:0.100px #262626;">14</div>
<div class="t" style="top:266.66px;font-size:8.40px;line-height:10.08px;color:#262626;left:8.70px;width:80px;margin-left:-40px;text-align:center;-webkit-text-stroke:0.100px #262626;">15</div>
<div class="t" style="top:281.06px;font-size:8.40px;line-height:10.08px;color:#262626;left:8.70px;width:80px;margin-left:-40px;text-align:center;-webkit-text-stroke:0.100px #262626;">16</div>
<div class="t" style="top:295.46px;font-size:8.40px;line-height:10.08px;color:#262626;left:8.70px;width:80px;margin-left:-40px;text-align:center;-webkit-text-stroke:0.100px #262626;">17</div>
<div class="t" style="top:309.86px;font-size:8.40px;line-height:10.08px;color:#262626;left:8.70px;width:80px;margin-left:-40px;text-align:center;-webkit-text-stroke:0.100px #262626;">18</div>
<div class="t" style="top:324.26px;font-size:8.40px;line-height:10.08px;color:#262626;left:8.70px;width:80px;margin-left:-40px;text-align:center;-webkit-text-stroke:0.100px #262626;">19</div>
<div class="t" style="top:338.66px;font-size:8.40px;line-height:10.08px;color:#262626;left:8.70px;width:80px;margin-left:-40px;text-align:center;-webkit-text-stroke:0.100px #262626;">20</div>
<div class="t" style="top:353.06px;font-size:8.40px;line-height:10.08px;color:#262626;left:8.70px;width:80px;margin-left:-40px;text-align:center;-webkit-text-stroke:0.100px #262626;">21</div>
<div class="t" style="top:367.46px;font-size:8.40px;line-height:10.08px;color:#262626;left:8.70px;width:80px;margin-left:-40px;text-align:center;-webkit-text-stroke:0.100px #262626;">22</div>
<div class="t" style="top:381.86px;font-size:8.40px;line-height:10.08px;color:#262626;left:8.70px;width:80px;margin-left:-40px;text-align:center;-webkit-text-stroke:0.100px #262626;">23</div>
<div class="t" style="top:396.26px;font-size:8.40px;line-height:10.08px;color:#262626;left:8.70px;width:80px;margin-left:-40px;text-align:center;-webkit-text-stroke:0.100px #262626;">24</div>
<div class="t" style="top:410.66px;font-size:8.40px;line-height:10.08px;color:#262626;left:8.70px;width:80px;margin-left:-40px;text-align:center;-webkit-text-stroke:0.100px #262626;">25</div>
<div class="t" style="top:425.06px;font-size:8.40px;line-height:10.08px;color:#262626;left:8.70px;width:80px;margin-left:-40px;text-align:center;-webkit-text-stroke:0.100px #262626;">26</div>
<div class="t" style="top:439.46px;font-size:8.40px;line-height:10.08px;color:#262626;left:8.70px;width:80px;margin-left:-40px;text-align:center;-webkit-text-stroke:0.100px #262626;">27</div>
<div class="t" style="left:0;top:450.70px;width:17.6px;height:6.80px;overflow:hidden;text-align:center;font-size:8.2px;line-height:9.1px;color:#2e2e2e"><span style="position:relative;top:3.400px">28</span></div>
<svg class="j jb" style="left:24.50px;top:66.20px;color:#111" width="11.30" height="6.40" viewBox="0 -176 353.1 200" role="img" aria-label="年度"><text x="0" y="0" font-size="177" textLength="353.1" lengthAdjust="spacingAndGlyphs">年度</text></svg>
<svg style="left:57.90px;top:64.80px" width="10" height="9.500" viewBox="0 0 20 19" fill="none" stroke="#333" stroke-width="2"><path d="M9 3.500h10M9 9.500h10M9 15.500h10"/><path d="M1 3l2 2 3.500-4M1 9l2 2 3.500-4M1 15l2 2 3.500-4"/></svg>
<svg style="left:76.20px;top:64.40px" width="10.500" height="10.500" viewBox="0 0 21 21" fill="none" stroke="#4a4a4a" stroke-width="1.600" stroke-linejoin="round"><path d="M0.800 1.200h19l-7 7.800v9.500l-4-2.500v-7z"/><path d="M13 11.500l7.500 8.500M20.500 11.500l-7.500 8.500" stroke="#E0607A" stroke-width="1.700"/></svg>
<svg class="j" style="left:29.20px;top:81.35px;color:#5c5c5c" width="28.80" height="7.30" viewBox="0 -176 789.0 200" role="img" aria-label="2018年度"><text x="0" y="0" font-size="187" textLength="789" lengthAdjust="spacingAndGlyphs">2018年度</text></svg>
<svg class="j" style="left:29.20px;top:94.72px;color:#5c5c5c" width="28.80" height="7.30" viewBox="0 -176 789.0 200" role="img" aria-label="2019年度"><text x="0" y="0" font-size="187" textLength="789" lengthAdjust="spacingAndGlyphs">2019年度</text></svg>
<svg class="j" style="left:29.20px;top:108.09px;color:#5c5c5c" width="28.80" height="7.30" viewBox="0 -176 789.0 200" role="img" aria-label="2020年度"><text x="0" y="0" font-size="187" textLength="789" lengthAdjust="spacingAndGlyphs">2020年度</text></svg>
<svg class="j" style="left:29.20px;top:121.46px;color:#5c5c5c" width="28.80" height="7.30" viewBox="0 -176 789.0 200" role="img" aria-label="2021年度"><text x="0" y="0" font-size="187" textLength="789" lengthAdjust="spacingAndGlyphs">2021年度</text></svg>
<svg class="j" style="left:29.20px;top:134.83px;color:#5c5c5c" width="28.80" height="7.30" viewBox="0 -176 789.0 200" role="img" aria-label="2022年度"><text x="0" y="0" font-size="187" textLength="789" lengthAdjust="spacingAndGlyphs">2022年度</text></svg>
<svg class="j" style="left:29.20px;top:148.20px;color:#5c5c5c" width="28.80" height="7.30" viewBox="0 -176 789.0 200" role="img" aria-label="2023年度"><text x="0" y="0" font-size="187" textLength="789" lengthAdjust="spacingAndGlyphs">2023年度</text></svg>
<svg class="j jb" style="left:100.00px;top:66.15px;color:#111" width="11.80" height="6.50" viewBox="0 -176 363.1 200" role="img" aria-label="属性"><text x="0" y="0" font-size="182" textLength="363.1" lengthAdjust="spacingAndGlyphs">属性</text></svg>
<svg style="left:174.20px;top:64.80px" width="10" height="9.500" viewBox="0 0 20 19" fill="none" stroke="#333" stroke-width="2"><path d="M9 3.500h10M9 9.500h10M9 15.500h10"/><path d="M1 3l2 2 3.500-4M1 9l2 2 3.500-4M1 15l2 2 3.500-4"/></svg>
<svg class="j" style="left:105.00px;top:81.95px;color:#484848;stroke-width:2" width="44.00" height="6.30" viewBox="0 -176 1396.8 200" role="img" aria-label="0歳から3歳未満"><text x="0" y="0" font-size="196" textLength="1396.8" lengthAdjust="spacingAndGlyphs">0歳から3歳未満</text></svg>
<svg class="j" style="left:105.00px;top:95.32px;color:#484848;stroke-width:2" width="59.10" height="6.30" viewBox="0 -176 1876.2 200" role="img" aria-label="3歳以上小学校修了前"><text x="0" y="0" font-size="196" textLength="1876.2" lengthAdjust="spacingAndGlyphs">3歳以上小学校修了前</text></svg>
<svg class="j" style="left:105.00px;top:108.69px;color:#484848;stroke-width:2" width="75.00" height="6.30" viewBox="0 -176 2381.0 200" role="img" aria-label="小学校修了後中学校修了前"><text x="0" y="0" font-size="198" textLength="2381" lengthAdjust="spacingAndGlyphs">小学校修了後中学校修了前</text></svg>
<svg style="left:189.6px;top:65.6px" width="10.400" height="10.400" viewBox="0 0 10.400 10.400" stroke="#3DA35D" stroke-width="0.600"><path d="M5.200 0v10.400M0 5.200h10.400"/></svg>
<svg style="left:189px;top:88.500px" width="12" height="11" viewBox="0 0 24 22"><path d="M22 2l-9.500 8.400 2.600 2.600z" fill="#777"/><path d="M12.400 10.800l3 3c-1 3.500-6.400 6-13.400 5c3.500-1 3.500-3.500 5.500-5.800c1.500-1.600 3.400-2.400 4.900-2.200z" fill="#3C7DD0"/></svg>
<svg class="j jb" style="left:100.00px;top:129.15px;color:#111" width="17.80" height="6.50" viewBox="0 -176 547.7 200" role="img" aria-label="施設等"><text x="0" y="0" font-size="183" textLength="547.7" lengthAdjust="spacingAndGlyphs">施設等</text></svg>
<svg style="left:174.20px;top:127.60px" width="10" height="9.500" viewBox="0 0 20 19" fill="none" stroke="#333" stroke-width="2"><path d="M9 3.500h10M9 9.500h10M9 15.500h10"/><path d="M1 3l2 2 3.500-4M1 9l2 2 3.500-4M1 15l2 2 3.500-4"/></svg>
<svg style="left:193.00px;top:127.20px" width="10.500" height="10.500" viewBox="0 0 21 21" fill="none" stroke="#c2c2c2" stroke-width="1.600" stroke-linejoin="round"><path d="M0.800 1.200h19l-7 7.800v9.500l-4-2.500v-7z"/><path d="M13 11.500l7.500 8.500M20.500 11.500l-7.500 8.500" stroke="#d4d4d4" stroke-width="1.700"/></svg>
<svg class="j" style="left:105.00px;top:145.57px;color:#484848;stroke-width:2" width="31.10" height="6.25" viewBox="0 -176 995.2 200" role="img" aria-label="のぞみの園"><text x="0" y="0" font-size="199" textLength="995.2" lengthAdjust="spacingAndGlyphs">のぞみの園</text></svg>
<svg class="j" style="left:105.00px;top:158.97px;color:#484848;stroke-width:2" width="24.88" height="6.25" viewBox="0 -176 796.2 200" role="img" aria-label="救護施設"><text x="0" y="0" font-size="199" textLength="796.2" lengthAdjust="spacingAndGlyphs">救護施設</text></svg>
<svg class="j" style="left:105.00px;top:172.38px;color:#484848;stroke-width:2" width="24.88" height="6.25" viewBox="0 -176 796.2 200" role="img" aria-label="更生施設"><text x="0" y="0" font-size="199" textLength="796.2" lengthAdjust="spacingAndGlyphs">更生施設</text></svg>
<svg class="j" style="left:105.00px;top:185.77px;color:#484848;stroke-width:2" width="62.20" height="6.25" viewBox="0 -176 1990.4 200" role="img" aria-label="指定発達支援医療機関"><text x="0" y="0" font-size="199" textLength="1990.4" lengthAdjust="spacingAndGlyphs">指定発達支援医療機関</text></svg>
<svg class="j" style="left:105.00px;top:199.17px;color:#484848;stroke-width:2" width="49.76" height="6.25" viewBox="0 -176 1592.3 200" role="img" aria-label="児童自立支援施設"><text x="0" y="0" font-size="199" textLength="1592.3" lengthAdjust="spacingAndGlyphs">児童自立支援施設</text></svg>
<svg class="j" style="left:105.00px;top:212.57px;color:#484848;stroke-width:2" width="49.76" height="6.25" viewBox="0 -176 1592.3 200" role="img" aria-label="児童心理治療施設"><text x="0" y="0" font-size="199" textLength="1592.3" lengthAdjust="spacingAndGlyphs">児童心理治療施設</text></svg>
<svg class="j" style="left:105.00px;top:225.97px;color:#484848;stroke-width:2" width="37.32" height="6.25" viewBox="0 -176 1194.2 200" role="img" aria-label="児童養護施設"><text x="0" y="0" font-size="199" textLength="1194.2" lengthAdjust="spacingAndGlyphs">児童養護施設</text></svg>
<svg class="j" style="left:105.00px;top:239.38px;color:#484848;stroke-width:2" width="80.86" height="6.25" viewBox="0 -176 2587.5 200" role="img" aria-label="小規模住居型児童養育事業者"><text x="0" y="0" font-size="199" textLength="2587.5" lengthAdjust="spacingAndGlyphs">小規模住居型児童養育事業者</text></svg>
<svg class="j" style="left:105.00px;top:252.77px;color:#484848;stroke-width:2" width="43.54" height="6.25" viewBox="0 -176 1393.3 200" role="img" aria-label="障害児入所施設"><text x="0" y="0" font-size="199" textLength="1393.3" lengthAdjust="spacingAndGlyphs">障害児入所施設</text></svg>
<svg class="j" style="left:105.00px;top:266.18px;color:#484848;stroke-width:2" width="43.54" height="6.25" viewBox="0 -176 1393.3 200" role="img" aria-label="障害者支援施設"><text x="0" y="0" font-size="199" textLength="1393.3" lengthAdjust="spacingAndGlyphs">障害者支援施設</text></svg>
<svg class="j" style="left:105.00px;top:279.57px;color:#484848;stroke-width:2" width="62.20" height="6.25" viewBox="0 -176 1990.4 200" role="img" aria-label="日常生活支援住居施設"><text x="0" y="0" font-size="199" textLength="1990.4" lengthAdjust="spacingAndGlyphs">日常生活支援住居施設</text></svg>
<svg class="j" style="left:105.00px;top:292.98px;color:#484848;stroke-width:2" width="18.66" height="6.25" viewBox="0 -176 597.1 200" role="img" aria-label="乳児院"><text x="0" y="0" font-size="199" textLength="597.1" lengthAdjust="spacingAndGlyphs">乳児院</text></svg>
<svg class="j" style="left:105.00px;top:306.38px;color:#484848;stroke-width:2" width="37.32" height="6.25" viewBox="0 -176 1194.2 200" role="img" aria-label="婦人保護施設"><text x="0" y="0" font-size="199" textLength="1194.2" lengthAdjust="spacingAndGlyphs">婦人保護施設</text></svg>
<svg class="j" style="left:105.00px;top:319.77px;color:#484848;stroke-width:2" width="12.44" height="6.25" viewBox="0 -176 398.1 200" role="img" aria-label="里親"><text x="0" y="0" font-size="199" textLength="398.1" lengthAdjust="spacingAndGlyphs">里親</text></svg>
<svg class="j jb" style="left:100.00px;top:339.95px;color:#111" width="42.30" height="6.50" viewBox="0 -176 1301.5 200" role="img" aria-label="code_都道府県"><text x="0" y="0" font-size="187" textLength="1301.5" lengthAdjust="spacingAndGlyphs">code_都道府県</text></svg>
<svg style="left:174.20px;top:338.20px" width="10" height="9.500" viewBox="0 0 20 19" fill="none" stroke="#333" stroke-width="2"><path d="M9 3.500h10M9 9.500h10M9 15.500h10"/><path d="M1 3l2 2 3.500-4M1 9l2 2 3.500-4M1 15l2 2 3.500-4"/></svg>
<svg style="left:193.00px;top:337.80px" width="10.500" height="10.500" viewBox="0 0 21 21" fill="none" stroke="#c2c2c2" stroke-width="1.600" stroke-linejoin="round"><path d="M0.800 1.200h19l-7 7.800v9.500l-4-2.500v-7z"/><path d="M13 11.500l7.500 8.500M20.500 11.500l-7.500 8.500" stroke="#d4d4d4" stroke-width="1.700"/></svg>
<svg class="j" style="left:105.00px;top:355.55px;color:#484848;stroke-width:2" width="31.00" height="6.30" viewBox="0 -176 984.1 200" role="img" aria-label="01_北海道"><text x="0" y="0" font-size="211" textLength="984.1" lengthAdjust="spacingAndGlyphs">01_北海道</text></svg>
<svg class="j" style="left:105.00px;top:368.95px;color:#484848;stroke-width:2" width="31.00" height="6.30" viewBox="0 -176 984.1 200" role="img" aria-label="02_青森県"><text x="0" y="0" font-size="211" textLength="984.1" lengthAdjust="spacingAndGlyphs">02_青森県</text></svg>
<svg class="j" style="left:105.00px;top:382.35px;color:#484848;stroke-width:2" width="31.00" height="6.30" viewBox="0 -176 984.1 200" role="img" aria-label="03_岩手県"><text x="0" y="0" font-size="211" textLength="984.1" lengthAdjust="spacingAndGlyphs">03_岩手県</text></svg>
<svg class="j" style="left:105.00px;top:395.75px;color:#484848;stroke-width:2" width="31.00" height="6.30" viewBox="0 -176 984.1 200" role="img" aria-label="04_宮城県"><text x="0" y="0" font-size="211" textLength="984.1" lengthAdjust="spacingAndGlyphs">04_宮城県</text></svg>
<svg class="j" style="left:105.00px;top:409.15px;color:#484848;stroke-width:2" width="31.00" height="6.30" viewBox="0 -176 984.1 200" role="img" aria-label="05_秋田県"><text x="0" y="0" font-size="211" textLength="984.1" lengthAdjust="spacingAndGlyphs">05_秋田県</text></svg>
<svg class="j" style="left:105.00px;top:422.55px;color:#484848;stroke-width:2" width="31.00" height="6.30" viewBox="0 -176 984.1 200" role="img" aria-label="06_山形県"><text x="0" y="0" font-size="211" textLength="984.1" lengthAdjust="spacingAndGlyphs">06_山形県</text></svg>
<svg class="j" style="left:105.00px;top:435.95px;color:#484848;stroke-width:2" width="31.00" height="6.30" viewBox="0 -176 984.1 200" role="img" aria-label="07_福島県"><text x="0" y="0" font-size="211" textLength="984.1" lengthAdjust="spacingAndGlyphs">07_福島県</text></svg>
<svg style="left:0;top:0" width="924" height="477" viewBox="0 0 924 477" shape-rendering="auto"><path d="M241.6 333.10H580.6" stroke="#EBEBEB" stroke-width="0.800"/><path d="M241.6 292.00H580.6" stroke="#EBEBEB" stroke-width="0.800"/><path d="M241.6 250.90H580.6" stroke="#EBEBEB" stroke-width="0.800"/><path d="M241.6 209.80H580.6" stroke="#EBEBEB" stroke-width="0.800"/><path d="M241.6 168.70H580.6" stroke="#EBEBEB" stroke-width="0.800"/><path d="M241.6 127.60H580.6" stroke="#EBEBEB" stroke-width="0.800"/><path d="M241.6 86.50H580.6" stroke="#EBEBEB" stroke-width="0.800"/><rect x="242.85" y="233.40" width="4.70" height="47.00" fill="#5C9461"/><rect x="242.85" y="280.40" width="4.70" height="85.04" fill="#EFA173"/><rect x="242.85" y="365.44" width="4.70" height="8.76" fill="#4A80A6"/><rect x="250.06" y="345.31" width="4.70" height="10.40" fill="#5C9461"/><rect x="250.06" y="355.71" width="4.70" height="16.44" fill="#EFA173"/><rect x="250.06" y="372.16" width="4.70" height="2.04" fill="#4A80A6"/><rect x="257.28" y="346.99" width="4.70" height="8.72" fill="#5C9461"/><rect x="257.28" y="355.71" width="4.70" height="17.11" fill="#EFA173"/><rect x="257.28" y="372.83" width="4.70" height="1.37" fill="#4A80A6"/><rect x="264.49" y="336.76" width="4.70" height="11.07" fill="#5C9461"/><rect x="264.49" y="347.83" width="4.70" height="23.49" fill="#EFA173"/><rect x="264.49" y="371.32" width="4.70" height="2.88" fill="#4A80A6"/><rect x="271.70" y="355.55" width="4.70" height="6.04" fill="#5C9461"/><rect x="271.70" y="361.59" width="4.70" height="11.74" fill="#EFA173"/><rect x="271.70" y="373.33" width="4.70" height="0.87" fill="#4A80A6"/><rect x="278.91" y="352.36" width="4.70" height="5.87" fill="#5C9461"/><rect x="278.91" y="358.23" width="4.70" height="15.10" fill="#EFA173"/><rect x="278.91" y="373.33" width="4.70" height="0.87" fill="#4A80A6"/><rect x="286.13" y="338.60" width="4.70" height="12.58" fill="#5C9461"/><rect x="286.13" y="351.19" width="4.70" height="21.14" fill="#EFA173"/><rect x="286.13" y="372.32" width="4.70" height="1.88" fill="#4A80A6"/><rect x="293.34" y="304.38" width="4.70" height="23.32" fill="#5C9461"/><rect x="293.34" y="327.70" width="4.70" height="41.77" fill="#EFA173"/><rect x="293.34" y="369.47" width="4.70" height="4.73" fill="#4A80A6"/><rect x="300.55" y="326.19" width="4.70" height="13.25" fill="#5C9461"/><rect x="300.55" y="339.44" width="4.70" height="29.53" fill="#EFA173"/><rect x="300.55" y="368.97" width="4.70" height="5.23" fill="#4A80A6"/><rect x="307.77" y="331.05" width="4.70" height="12.41" fill="#5C9461"/><rect x="307.77" y="343.47" width="4.70" height="27.01" fill="#EFA173"/><rect x="307.77" y="370.48" width="4.70" height="3.72" fill="#4A80A6"/><rect x="314.98" y="236.50" width="4.70" height="39.20" fill="#5C9461"/><rect x="314.98" y="275.70" width="4.70" height="82.20" fill="#EFA173"/><rect x="314.98" y="357.90" width="4.70" height="16.30" fill="#4A80A6"/><rect x="322.19" y="255.20" width="4.70" height="38.60" fill="#5C9461"/><rect x="322.19" y="293.80" width="4.70" height="73.32" fill="#EFA173"/><rect x="322.19" y="367.12" width="4.70" height="7.08" fill="#4A80A6"/><rect x="329.41" y="128.10" width="4.70" height="78.50" fill="#5C9461"/><rect x="329.41" y="206.60" width="4.70" height="139.89" fill="#EFA173"/><rect x="329.41" y="346.49" width="4.70" height="27.71" fill="#4A80A6"/><rect x="336.62" y="199.10" width="4.70" height="52.00" fill="#5C9461"/><rect x="336.62" y="251.10" width="4.70" height="107.63" fill="#EFA173"/><rect x="336.62" y="358.73" width="4.70" height="15.47" fill="#4A80A6"/><rect x="343.83" y="347.83" width="4.70" height="9.56" fill="#5C9461"/><rect x="343.83" y="357.39" width="4.70" height="14.43" fill="#EFA173"/><rect x="343.83" y="371.82" width="4.70" height="2.38" fill="#4A80A6"/><rect x="351.04" y="361.75" width="4.70" height="4.03" fill="#5C9461"/><rect x="351.04" y="365.78" width="4.70" height="7.55" fill="#EFA173"/><rect x="351.04" y="373.33" width="4.70" height="0.87" fill="#4A80A6"/><rect x="358.26" y="354.54" width="4.70" height="7.55" fill="#5C9461"/><rect x="358.26" y="362.09" width="4.70" height="11.24" fill="#EFA173"/><rect x="358.26" y="373.33" width="4.70" height="0.87" fill="#4A80A6"/><rect x="365.47" y="360.75" width="4.70" height="3.86" fill="#5C9461"/><rect x="365.47" y="364.61" width="4.70" height="8.72" fill="#EFA173"/><rect x="365.47" y="373.33" width="4.70" height="0.87" fill="#4A80A6"/><rect x="372.68" y="354.54" width="4.70" height="6.37" fill="#5C9461"/><rect x="372.68" y="360.92" width="4.70" height="12.08" fill="#EFA173"/><rect x="372.68" y="372.99" width="4.70" height="1.21" fill="#4A80A6"/><rect x="379.90" y="329.04" width="4.70" height="15.77" fill="#5C9461"/><rect x="379.90" y="344.81" width="4.70" height="25.50" fill="#EFA173"/><rect x="379.90" y="370.31" width="4.70" height="3.89" fill="#4A80A6"/><rect x="387.11" y="335.08" width="4.70" height="11.74" fill="#5C9461"/><rect x="387.11" y="346.82" width="4.70" height="24.49" fill="#EFA173"/><rect x="387.11" y="371.32" width="4.70" height="2.88" fill="#4A80A6"/><rect x="394.32" y="304.55" width="4.70" height="22.65" fill="#5C9461"/><rect x="394.32" y="327.20" width="4.70" height="41.10" fill="#EFA173"/><rect x="394.32" y="368.30" width="4.70" height="5.90" fill="#4A80A6"/><rect x="401.54" y="211.30" width="4.70" height="44.60" fill="#5C9461"/><rect x="401.54" y="255.90" width="4.70" height="103.51" fill="#EFA173"/><rect x="401.54" y="359.41" width="4.70" height="14.79" fill="#4A80A6"/><rect x="408.75" y="332.06" width="4.70" height="13.59" fill="#5C9461"/><rect x="408.75" y="345.65" width="4.70" height="26.00" fill="#EFA173"/><rect x="408.75" y="371.65" width="4.70" height="2.55" fill="#4A80A6"/><rect x="415.96" y="352.70" width="4.70" height="7.21" fill="#5C9461"/><rect x="415.96" y="359.91" width="4.70" height="13.42" fill="#EFA173"/><rect x="415.96" y="373.33" width="4.70" height="0.87" fill="#4A80A6"/><rect x="423.17" y="327.36" width="4.70" height="14.09" fill="#5C9461"/><rect x="423.17" y="341.46" width="4.70" height="29.36" fill="#EFA173"/><rect x="423.17" y="370.81" width="4.70" height="3.39" fill="#4A80A6"/><rect x="430.39" y="129.20" width="4.70" height="79.60" fill="#5C9461"/><rect x="430.39" y="208.80" width="4.70" height="144.40" fill="#EFA173"/><rect x="430.39" y="353.20" width="4.70" height="21.00" fill="#4A80A6"/><rect x="437.60" y="252.70" width="4.70" height="43.30" fill="#5C9461"/><rect x="437.60" y="296.00" width="4.70" height="70.28" fill="#EFA173"/><rect x="437.60" y="366.28" width="4.70" height="7.92" fill="#4A80A6"/><rect x="444.81" y="346.49" width="4.70" height="9.23" fill="#5C9461"/><rect x="444.81" y="355.71" width="4.70" height="16.78" fill="#EFA173"/><rect x="444.81" y="372.49" width="4.70" height="1.71" fill="#4A80A6"/><rect x="452.03" y="348.00" width="4.70" height="8.56" fill="#5C9461"/><rect x="452.03" y="356.55" width="4.70" height="16.94" fill="#EFA173"/><rect x="452.03" y="373.50" width="4.70" height="0.70" fill="#4A80A6"/><rect x="459.24" y="355.55" width="4.70" height="6.88" fill="#5C9461"/><rect x="459.24" y="362.43" width="4.70" height="10.57" fill="#EFA173"/><rect x="459.24" y="372.99" width="4.70" height="1.21" fill="#4A80A6"/><rect x="466.45" y="357.06" width="4.70" height="5.37" fill="#5C9461"/><rect x="466.45" y="362.43" width="4.70" height="10.90" fill="#EFA173"/><rect x="466.45" y="373.33" width="4.70" height="0.87" fill="#4A80A6"/><rect x="473.67" y="337.43" width="4.70" height="12.75" fill="#5C9461"/><rect x="473.67" y="350.18" width="4.70" height="22.31" fill="#EFA173"/><rect x="473.67" y="372.49" width="4.70" height="1.71" fill="#4A80A6"/><rect x="480.88" y="314.28" width="4.70" height="19.29" fill="#5C9461"/><rect x="480.88" y="333.57" width="4.70" height="36.74" fill="#EFA173"/><rect x="480.88" y="370.31" width="4.70" height="3.89" fill="#4A80A6"/><rect x="488.09" y="339.27" width="4.70" height="12.58" fill="#5C9461"/><rect x="488.09" y="351.86" width="4.70" height="21.14" fill="#EFA173"/><rect x="488.09" y="372.99" width="4.70" height="1.21" fill="#4A80A6"/><rect x="495.30" y="352.19" width="4.70" height="7.21" fill="#5C9461"/><rect x="495.30" y="359.41" width="4.70" height="13.92" fill="#EFA173"/><rect x="495.30" y="373.33" width="4.70" height="0.87" fill="#4A80A6"/><rect x="502.52" y="358.57" width="4.70" height="5.20" fill="#5C9461"/><rect x="502.52" y="363.77" width="4.70" height="9.73" fill="#EFA173"/><rect x="502.52" y="373.50" width="4.70" height="0.70" fill="#4A80A6"/><rect x="509.73" y="339.95" width="4.70" height="11.91" fill="#5C9461"/><rect x="509.73" y="351.86" width="4.70" height="20.80" fill="#EFA173"/><rect x="509.73" y="372.66" width="4.70" height="1.54" fill="#4A80A6"/><rect x="516.94" y="347.33" width="4.70" height="9.39" fill="#5C9461"/><rect x="516.94" y="356.72" width="4.70" height="16.61" fill="#EFA173"/><rect x="516.94" y="373.33" width="4.70" height="0.87" fill="#4A80A6"/><rect x="524.16" y="263.10" width="4.70" height="32.10" fill="#5C9461"/><rect x="524.16" y="295.20" width="4.70" height="69.24" fill="#EFA173"/><rect x="524.16" y="364.44" width="4.70" height="9.76" fill="#4A80A6"/><rect x="531.37" y="355.21" width="4.70" height="6.88" fill="#5C9461"/><rect x="531.37" y="362.09" width="4.70" height="11.24" fill="#EFA173"/><rect x="531.37" y="373.33" width="4.70" height="0.87" fill="#4A80A6"/><rect x="538.58" y="339.78" width="4.70" height="13.42" fill="#5C9461"/><rect x="538.58" y="353.20" width="4.70" height="19.63" fill="#EFA173"/><rect x="538.58" y="372.83" width="4.70" height="1.37" fill="#4A80A6"/><rect x="545.80" y="312.27" width="4.70" height="18.29" fill="#5C9461"/><rect x="545.80" y="330.55" width="4.70" height="38.25" fill="#EFA173"/><rect x="545.80" y="368.80" width="4.70" height="5.40" fill="#4A80A6"/><rect x="553.01" y="336.93" width="4.70" height="13.76" fill="#5C9461"/><rect x="553.01" y="350.68" width="4.70" height="22.48" fill="#EFA173"/><rect x="553.01" y="373.16" width="4.70" height="1.04" fill="#4A80A6"/><rect x="560.22" y="338.94" width="4.70" height="10.90" fill="#5C9461"/><rect x="560.22" y="349.84" width="4.70" height="22.98" fill="#EFA173"/><rect x="560.22" y="372.83" width="4.70" height="1.37" fill="#4A80A6"/><rect x="567.43" y="319.48" width="4.70" height="16.61" fill="#5C9461"/><rect x="567.43" y="336.09" width="4.70" height="34.73" fill="#EFA173"/><rect x="567.43" y="370.81" width="4.70" height="3.39" fill="#4A80A6"/><rect x="574.65" y="335.58" width="4.70" height="13.42" fill="#5C9461"/><rect x="574.65" y="349.00" width="4.70" height="23.49" fill="#EFA173"/><rect x="574.65" y="372.49" width="4.70" height="1.71" fill="#4A80A6"/><path d="M241.6 374.20H580.6" stroke="#D4D4D4" stroke-width="0.800"/><path d="M241.6 374.20V429M580.6 374.20V429" stroke="#D9D9D9" stroke-width="0.800"/></svg>
<div class="t" style="top:371.16px;font-size:6.40px;line-height:7.68px;color:#595959;right:691.10px;text-align:right;">0</div>
<div class="t" style="top:330.06px;font-size:6.40px;line-height:7.68px;color:#595959;right:691.10px;text-align:right;">500</div>
<div class="t" style="top:288.96px;font-size:6.40px;line-height:7.68px;color:#595959;right:691.10px;text-align:right;">1,000</div>
<div class="t" style="top:247.86px;font-size:6.40px;line-height:7.68px;color:#595959;right:691.10px;text-align:right;">1,500</div>
<div class="t" style="top:206.76px;font-size:6.40px;line-height:7.68px;color:#595959;right:691.10px;text-align:right;">2,000</div>
<div class="t" style="top:165.66px;font-size:6.40px;line-height:7.68px;color:#595959;right:691.10px;text-align:right;">2,500</div>
<div class="t" style="top:124.56px;font-size:6.40px;line-height:7.68px;color:#595959;right:691.10px;text-align:right;">3,000</div>
<div class="t" style="top:83.46px;font-size:6.40px;line-height:7.68px;color:#595959;right:691.10px;text-align:right;">3,500</div>
<svg class="j" style="left:246.00px;top:407.50px;color:#595959;transform-origin:0 50%;transform:rotate(-90deg)" width="31.80" height="7.00" viewBox="0 -176 908.6 200" role="img" aria-label="01_北海道"><text x="0" y="0" font-size="195" textLength="908.6" lengthAdjust="spacingAndGlyphs">01_北海道</text></svg>
<svg class="j" style="left:260.43px;top:407.50px;color:#595959;transform-origin:0 50%;transform:rotate(-90deg)" width="31.80" height="7.00" viewBox="0 -176 908.6 200" role="img" aria-label="03_岩手県"><text x="0" y="0" font-size="195" textLength="908.6" lengthAdjust="spacingAndGlyphs">03_岩手県</text></svg>
<svg class="j" style="left:274.85px;top:407.50px;color:#595959;transform-origin:0 50%;transform:rotate(-90deg)" width="31.80" height="7.00" viewBox="0 -176 908.6 200" role="img" aria-label="05_秋田県"><text x="0" y="0" font-size="195" textLength="908.6" lengthAdjust="spacingAndGlyphs">05_秋田県</text></svg>
<svg class="j" style="left:289.28px;top:407.50px;color:#595959;transform-origin:0 50%;transform:rotate(-90deg)" width="31.80" height="7.00" viewBox="0 -176 908.6 200" role="img" aria-label="07_福島県"><text x="0" y="0" font-size="195" textLength="908.6" lengthAdjust="spacingAndGlyphs">07_福島県</text></svg>
<svg class="j" style="left:303.70px;top:407.50px;color:#595959;transform-origin:0 50%;transform:rotate(-90deg)" width="31.80" height="7.00" viewBox="0 -176 908.6 200" role="img" aria-label="09_栃木県"><text x="0" y="0" font-size="195" textLength="908.6" lengthAdjust="spacingAndGlyphs">09_栃木県</text></svg>
<svg class="j" style="left:318.13px;top:407.50px;color:#595959;transform-origin:0 50%;transform:rotate(-90deg)" width="31.80" height="7.00" viewBox="0 -176 908.6 200" role="img" aria-label="11_埼玉県"><text x="0" y="0" font-size="195" textLength="908.6" lengthAdjust="spacingAndGlyphs">11_埼玉県</text></svg>
<svg class="j" style="left:332.56px;top:407.50px;color:#595959;transform-origin:0 50%;transform:rotate(-90deg)" width="31.80" height="7.00" viewBox="0 -176 908.6 200" role="img" aria-label="13_東京都"><text x="0" y="0" font-size="195" textLength="908.6" lengthAdjust="spacingAndGlyphs">13_東京都</text></svg>
<svg class="j" style="left:346.98px;top:407.50px;color:#595959;transform-origin:0 50%;transform:rotate(-90deg)" width="31.80" height="7.00" viewBox="0 -176 908.6 200" role="img" aria-label="15_新潟県"><text x="0" y="0" font-size="195" textLength="908.6" lengthAdjust="spacingAndGlyphs">15_新潟県</text></svg>
<svg class="j" style="left:361.41px;top:407.50px;color:#595959;transform-origin:0 50%;transform:rotate(-90deg)" width="31.80" height="7.00" viewBox="0 -176 908.6 200" role="img" aria-label="17_石川県"><text x="0" y="0" font-size="195" textLength="908.6" lengthAdjust="spacingAndGlyphs">17_石川県</text></svg>
<svg class="j" style="left:375.83px;top:407.50px;color:#595959;transform-origin:0 50%;transform:rotate(-90deg)" width="31.80" height="7.00" viewBox="0 -176 908.6 200" role="img" aria-label="19_山梨県"><text x="0" y="0" font-size="195" textLength="908.6" lengthAdjust="spacingAndGlyphs">19_山梨県</text></svg>
<svg class="j" style="left:390.26px;top:407.50px;color:#595959;transform-origin:0 50%;transform:rotate(-90deg)" width="31.80" height="7.00" viewBox="0 -176 908.6 200" role="img" aria-label="21_岐阜県"><text x="0" y="0" font-size="195" textLength="908.6" lengthAdjust="spacingAndGlyphs">21_岐阜県</text></svg>
<svg class="j" style="left:404.69px;top:407.50px;color:#595959;transform-origin:0 50%;transform:rotate(-90deg)" width="31.80" height="7.00" viewBox="0 -176 908.6 200" role="img" aria-label="23_愛知県"><text x="0" y="0" font-size="195" textLength="908.6" lengthAdjust="spacingAndGlyphs">23_愛知県</text></svg>
<svg class="j" style="left:419.11px;top:407.50px;color:#595959;transform-origin:0 50%;transform:rotate(-90deg)" width="31.80" height="7.00" viewBox="0 -176 908.6 200" role="img" aria-label="25_滋賀県"><text x="0" y="0" font-size="195" textLength="908.6" lengthAdjust="spacingAndGlyphs">25_滋賀県</text></svg>
<svg class="j" style="left:433.54px;top:407.50px;color:#595959;transform-origin:0 50%;transform:rotate(-90deg)" width="31.80" height="7.00" viewBox="0 -176 908.6 200" role="img" aria-label="27_大阪府"><text x="0" y="0" font-size="195" textLength="908.6" lengthAdjust="spacingAndGlyphs">27_大阪府</text></svg>
<svg class="j" style="left:447.96px;top:407.50px;color:#595959;transform-origin:0 50%;transform:rotate(-90deg)" width="31.80" height="7.00" viewBox="0 -176 908.6 200" role="img" aria-label="29_奈良県"><text x="0" y="0" font-size="195" textLength="908.6" lengthAdjust="spacingAndGlyphs">29_奈良県</text></svg>
<svg class="j" style="left:462.39px;top:407.50px;color:#595959;transform-origin:0 50%;transform:rotate(-90deg)" width="31.80" height="7.00" viewBox="0 -176 908.6 200" role="img" aria-label="31_鳥取県"><text x="0" y="0" font-size="195" textLength="908.6" lengthAdjust="spacingAndGlyphs">31_鳥取県</text></svg>
<svg class="j" style="left:476.82px;top:407.50px;color:#595959;transform-origin:0 50%;transform:rotate(-90deg)" width="31.80" height="7.00" viewBox="0 -176 908.6 200" role="img" aria-label="33_岡山県"><text x="0" y="0" font-size="195" textLength="908.6" lengthAdjust="spacingAndGlyphs">33_岡山県</text></svg>
<svg class="j" style="left:491.24px;top:407.50px;color:#595959;transform-origin:0 50%;transform:rotate(-90deg)" width="31.80" height="7.00" viewBox="0 -176 908.6 200" role="img" aria-label="35_山口県"><text x="0" y="0" font-size="195" textLength="908.6" lengthAdjust="spacingAndGlyphs">35_山口県</text></svg>
<svg class="j" style="left:505.67px;top:407.50px;color:#595959;transform-origin:0 50%;transform:rotate(-90deg)" width="31.80" height="7.00" viewBox="0 -176 908.6 200" role="img" aria-label="37_香川県"><text x="0" y="0" font-size="195" textLength="908.6" lengthAdjust="spacingAndGlyphs">37_香川県</text></svg>
<svg class="j" style="left:520.09px;top:407.50px;color:#595959;transform-origin:0 50%;transform:rotate(-90deg)" width="31.80" height="7.00" viewBox="0 -176 908.6 200" role="img" aria-label="39_高知県"><text x="0" y="0" font-size="195" textLength="908.6" lengthAdjust="spacingAndGlyphs">39_高知県</text></svg>
<svg class="j" style="left:534.52px;top:407.50px;color:#595959;transform-origin:0 50%;transform:rotate(-90deg)" width="31.80" height="7.00" viewBox="0 -176 908.6 200" role="img" aria-label="41_佐賀県"><text x="0" y="0" font-size="195" textLength="908.6" lengthAdjust="spacingAndGlyphs">41_佐賀県</text></svg>
<svg class="j" style="left:548.95px;top:407.50px;color:#595959;transform-origin:0 50%;transform:rotate(-90deg)" width="31.80" height="7.00" viewBox="0 -176 908.6 200" role="img" aria-label="43_熊本県"><text x="0" y="0" font-size="195" textLength="908.6" lengthAdjust="spacingAndGlyphs">43_熊本県</text></svg>
<svg class="j" style="left:563.37px;top:407.50px;color:#595959;transform-origin:0 50%;transform:rotate(-90deg)" width="31.80" height="7.00" viewBox="0 -176 908.6 200" role="img" aria-label="45_宮崎県"><text x="0" y="0" font-size="195" textLength="908.6" lengthAdjust="spacingAndGlyphs">45_宮崎県</text></svg>
<svg class="j" style="left:577.80px;top:407.50px;color:#595959;transform-origin:0 50%;transform:rotate(-90deg)" width="31.80" height="7.00" viewBox="0 -176 908.6 200" role="img" aria-label="47_沖縄県"><text x="0" y="0" font-size="195" textLength="908.6" lengthAdjust="spacingAndGlyphs">47_沖縄県</text></svg>
<svg class="j" style="left:396.75px;top:418.60px;color:#595959;stroke-width:2" width="28.50" height="6.80" viewBox="0 -176 838.2 200" role="img" aria-label="2023年度"><text x="0" y="0" font-size="199" textLength="838.2" lengthAdjust="spacingAndGlyphs">2023年度</text></svg>
<svg class="j" style="left:219.50px;top:69.80px;color:#222" width="78.50" height="6.20" viewBox="0 -176 2532.3 200" role="img" aria-label="合計 / 支給対象児童数 (人)"><text x="0" y="0" font-size="213" textLength="2532.3" lengthAdjust="spacingAndGlyphs">合計 / 支給対象児童数 (人)</text></svg>
<svg class="j jb" style="left:219.80px;top:435.05px;color:#222;stroke-width:0" width="12.60" height="6.50" viewBox="0 -176 387.7 200" role="img" aria-label="年度"><text x="0" y="0" font-size="194" textLength="387.7" lengthAdjust="spacingAndGlyphs">年度</text></svg>
<svg style="left:236.4px;top:438.3px" width="3.400" height="2.400" viewBox="0 0 6 4"><path d="M0 0h6l-3 4z" fill="#333"/></svg>
<svg style="left:240.2px;top:435.8px" width="6.600" height="5.800" viewBox="0 0 14 12"><path d="M0 0h14l-5.500 6v6h-3v-6z" fill="#5e5e5e"/></svg>
<svg class="j jb" style="left:251.60px;top:435.05px;color:#222;stroke-width:0" width="43.50" height="6.50" viewBox="0 -176 1338.5 200" role="img" aria-label="code_都道府県"><text x="0" y="0" font-size="193" textLength="1338.5" lengthAdjust="spacingAndGlyphs">code_都道府県</text></svg>
<svg style="left:298.8px;top:437.4px" width="3.800" height="2.600" viewBox="0 0 6 4"><path d="M0 0h6l-3 4z" fill="#333"/></svg>
<svg class="j jb" style="left:591.60px;top:232.00px;color:#111" width="13.20" height="6.60" viewBox="0 -176 400.0 200" role="img" aria-label="属性"><text x="0" y="0" font-size="200" textLength="400" lengthAdjust="spacingAndGlyphs">属性</text></svg>
<svg style="left:682.3px;top:234.3px" width="3.800" height="2.600" viewBox="0 0 6 4"><path d="M0 0h6l-3 4z" fill="#222"/></svg>
<svg class="j" style="left:599.30px;top:244.43px;color:#595959;stroke-width:2" width="86.20" height="7.15" viewBox="0 -176 2411.2 200" role="img" aria-label="小学校修了後中学校修了前"><text x="0" y="0" font-size="201" textLength="2411.2" lengthAdjust="spacingAndGlyphs">小学校修了後中学校修了前</text></svg>
<svg class="j" style="left:599.30px;top:257.53px;color:#595959;stroke-width:2" width="68.10" height="7.15" viewBox="0 -176 1904.9 200" role="img" aria-label="3歳以上小学校修了前"><text x="0" y="0" font-size="199" textLength="1904.9" lengthAdjust="spacingAndGlyphs">3歳以上小学校修了前</text></svg>
<svg class="j" style="left:599.30px;top:271.03px;color:#595959;stroke-width:2" width="50.00" height="7.15" viewBox="0 -176 1398.6 200" role="img" aria-label="0歳から3歳未満"><text x="0" y="0" font-size="197" textLength="1398.6" lengthAdjust="spacingAndGlyphs">0歳から3歳未満</text></svg>
<svg style="left:671.6px;top:435.4px" width="5" height="5" viewBox="0 0 10 10" stroke="#555" stroke-width="2"><path d="M5 1v8M1 5h8"/></svg>
<svg style="left:681px;top:435.4px" width="5" height="5" viewBox="0 0 10 10" stroke="#555" stroke-width="2"><path d="M1 5h8"/></svg>
<svg style="left:704.4px;top:50px" width="5.600" height="3.600" viewBox="0 0 8 5"><path d="M0 5l4-5 4 5z" fill="#5e5e5e"/></svg>
<svg style="left:705.2px;top:451.6px" width="5.600" height="3.600" viewBox="0 0 8 5"><path d="M0 0l4 5 4-5z" fill="#5e5e5e"/></svg>
<svg style="left:15px;top:463.5px" width="4" height="7" viewBox="0 0 4 7" fill="none" stroke="#b3b7be" stroke-width="0.900"><path d="M3.500 0.500l-3 3 3 3"/></svg>
<svg style="left:34.5px;top:463.5px" width="4" height="7" viewBox="0 0 4 7" fill="none" stroke="#b3b7be" stroke-width="0.900"><path d="M0.500 0.500l3 3-3 3"/></svg>
<div class="t" style="top:460.56px;font-size:9.40px;line-height:11.28px;color:#3a3a3a;left:82.00px;width:80px;margin-left:-40px;text-align:center;">data</div>
<div class="t" style="top:459.96px;font-size:9.40px;line-height:11.28px;color:#2f2f2f;left:118.60px;width:80px;margin-left:-40px;text-align:center;">pivot</div>
<svg style="left:162.3px;top:463.3px" width="7" height="7" viewBox="0 0 7 7" stroke="#444" stroke-width="0.900"><path d="M3.500 0v7M0 3.500h7"/></svg>
<svg style="left:442.6px;top:464.3px" width="3.600" height="5.600" viewBox="0 0 5 8"><path d="M5 0l-5 4 5 4z" fill="#5e5e5e"/></svg>
<svg style="left:694.8px;top:464.3px" width="3.600" height="5.600" viewBox="0 0 5 8"><path d="M0 0l5 4-5 4z" fill="#5e5e5e"/></svg>
<svg class="j jb" style="left:720.20px;top:55.90px;color:#1a1a1a" width="89.00" height="9.60" viewBox="0 -176 1854.2 200" role="img" aria-label="ピボットグラフのフィールド"><text x="0" y="0" font-size="180" textLength="1854.2" lengthAdjust="spacingAndGlyphs">ピボットグラフのフィールド</text></svg>
<svg style="left:887px;top:57.8px" width="8.500" height="5" viewBox="0 0 17 10" fill="none" stroke="#2a2a2a" stroke-width="2"><path d="M1 1l7.500 7.500 7.500-7.500"/></svg>
<svg style="left:907.6px;top:57.2px" width="6.200" height="6.200" viewBox="0 0 12 12" fill="none" stroke="#2a2a2a" stroke-width="2"><path d="M1 1l10 10M11 1l-10 10"/></svg>
<svg class="j jb" style="left:721.00px;top:73.70px;color:#1a1a1a" width="29.50" height="7.40" viewBox="0 -176 797.3 200" role="img" aria-label="アクティブ"><text x="0" y="0" font-size="195" textLength="797.3" lengthAdjust="spacingAndGlyphs">アクティブ</text></svg>
<svg class="j" style="left:765.00px;top:73.80px;color:#444" width="17.30" height="7.20" viewBox="0 -176 480.6 200" role="img" aria-label="すべて"><text x="0" y="0" font-size="195" textLength="480.6" lengthAdjust="spacingAndGlyphs">すべて</text></svg>
<svg class="j" style="left:721.00px;top:95.50px;color:#333" width="134.00" height="7.00" viewBox="0 -176 3828.6 200" role="img" aria-label="レポートに追加するフィールドを選択してください:"><text x="0" y="0" font-size="193" textLength="3828.6" lengthAdjust="spacingAndGlyphs">レポートに追加するフィールドを選択してください:</text></svg>
<svg style="left:894.6px;top:92.8px" width="10" height="10" viewBox="0 0 20 20" fill="none" stroke="#3a3a3a" stroke-width="1.700" stroke-linejoin="round">
<circle cx="10" cy="10" r="3.200"/><path d="M8.3 1.0L11.7 1.0L12.2 3.8L14.3 5.0L17.0 4.0L18.7 7.0L16.5 8.8L16.5 11.2L18.7 13.0L17.0 16.0L14.3 15.0L12.2 16.2L11.7 19.0L8.3 19.0L7.8 16.2L5.7 15.0L3.0 16.0L1.3 13.0L3.5 11.2L3.5 8.8L1.3 7.0L3.0 4.0L5.7 5.0L7.8 3.8z"/></svg>
<svg style="left:909.2px;top:97.2px" width="4.200" height="2.800" viewBox="0 0 8 5" fill="none" stroke="#333" stroke-width="1.700"><path d="M1 1l3 3 3-3"/></svg>
<svg class="j" style="left:725.20px;top:118.40px;color:#8a8a8a" width="13.20" height="6.60" viewBox="0 -176 400.0 200" role="img" aria-label="検索"><text x="0" y="0" font-size="200" textLength="400" lengthAdjust="spacingAndGlyphs">検索</text></svg>
<svg style="left:904.8px;top:116.6px" width="10" height="10" viewBox="0 0 20 20" fill="none" stroke="#3a3a3a" stroke-width="1.800"><circle cx="12.500" cy="7.500" r="6"/><path d="M8.200 11.800l-6.700 6.700"/></svg>
<svg style="left:725.3px;top:144.5px" width="4" height="3.500" viewBox="0 0 8 7"><path d="M8 0v7h-7z" fill="#666"/></svg>
<svg style="left:732.2px;top:140.8px" width="9.600" height="9.600" viewBox="0 0 18 18" fill="none" stroke="#4a4a4a" stroke-width="1.300">
<rect x="1" y="1" width="16" height="16" rx="1"/><path d="M1 5.500h16M1 9.500h16M1 13.500h16M6.300 5.500v11.500M11.700 5.500v11.500"/></svg>
<div class="t" style="top:141.22px;font-size:8.30px;line-height:9.96px;color:#1a1a1a;font-weight:bold;left:743.80px;">_00100_cfa_00100112_shicyoson_6_full_...</div>
<svg class="j" style="left:755.00px;top:153.35px;color:#555" width="15.20" height="7.50" viewBox="0 -176 405.3 200" role="img" aria-label="日付"><text x="0" y="0" font-size="203" textLength="405.3" lengthAdjust="spacingAndGlyphs">日付</text></svg>
<svg style="left:744.30px;top:167.00px" width="7.600" height="7.600" viewBox="0 0 15 15" fill="none" stroke="#fff" stroke-width="1.800"><path d="M3 7.500l3.300 3.300 6-6.500"/></svg>
<svg class="j jb" style="left:755.00px;top:168.35px;color:#1a1a1a" width="15.20" height="7.50" viewBox="0 -176 405.3 200" role="img" aria-label="年度"><text x="0" y="0" font-size="203" textLength="405.3" lengthAdjust="spacingAndGlyphs">年度</text></svg>
<svg class="j" style="left:755.00px;top:182.95px;color:#555" width="7.60" height="7.50" viewBox="0 -176 202.7 200" role="img" aria-label="値"><text x="0" y="0" font-size="203" textLength="202.7" lengthAdjust="spacingAndGlyphs">値</text></svg>
<svg style="left:744.30px;top:196.40px" width="7.600" height="7.600" viewBox="0 0 15 15" fill="none" stroke="#fff" stroke-width="1.800"><path d="M3 7.500l3.300 3.300 6-6.500"/></svg>
<svg class="j jb" style="left:755.00px;top:197.75px;color:#1a1a1a" width="52.00" height="7.50" viewBox="0 -176 1386.7 200" role="img" aria-label="code_都道府県"><text x="0" y="0" font-size="200" textLength="1386.7" lengthAdjust="spacingAndGlyphs">code_都道府県</text></svg>
<svg style="left:744.30px;top:211.40px" width="7.600" height="7.600" viewBox="0 0 15 15" fill="none" stroke="#fff" stroke-width="1.800"><path d="M3 7.500l3.300 3.300 6-6.500"/></svg>
<svg class="j jb" style="left:755.00px;top:212.75px;color:#1a1a1a" width="15.20" height="7.50" viewBox="0 -176 405.3 200" role="img" aria-label="属性"><text x="0" y="0" font-size="203" textLength="405.3" lengthAdjust="spacingAndGlyphs">属性</text></svg>
<svg class="j" style="left:755.00px;top:227.75px;color:#555" width="22.80" height="7.50" viewBox="0 -176 608.0 200" role="img" aria-label="施設等"><text x="0" y="0" font-size="203" textLength="608" lengthAdjust="spacingAndGlyphs">施設等</text></svg>
<svg style="left:744.30px;top:242.00px" width="7.600" height="7.600" viewBox="0 0 15 15" fill="none" stroke="#fff" stroke-width="1.800"><path d="M3 7.500l3.300 3.300 6-6.500"/></svg>
<svg class="j jb" style="left:755.00px;top:243.35px;color:#1a1a1a" width="67.00" height="7.50" viewBox="0 -176 1786.7 200" role="img" aria-label="支給対象児童数 (人)"><text x="0" y="0" font-size="198" textLength="1786.7" lengthAdjust="spacingAndGlyphs">支給対象児童数 (人)</text></svg>
<svg style="left:906.8px;top:167.6px" width="7.500" height="7.600" viewBox="0 0 15 15" fill="none" stroke="#444" stroke-width="1.200"><path d="M1 1h13l-5 6v6.500l-3-2v-4.500z"/></svg>
<svg class="j" style="left:722.00px;top:274.30px;color:#333" width="133.00" height="7.00" viewBox="0 -176 3800.0 200" role="img" aria-label="次のボックス間でフィールドをドラッグしてください:"><text x="0" y="0" font-size="187" textLength="3800" lengthAdjust="spacingAndGlyphs">次のボックス間でフィールドをドラッグしてください:</text></svg>
<svg style="left:724.9px;top:294.8px" width="6.500" height="6.500" viewBox="0 0 13 13"><path d="M0 0h13l-5 6v7h-3v-7z" fill="#6e6e6e"/></svg>
<svg class="j" style="left:736.00px;top:294.50px;color:#222" width="24.50" height="7.00" viewBox="0 -176 700.0 200" role="img" aria-label="フィルター"><text x="0" y="0" font-size="175" textLength="700" lengthAdjust="spacingAndGlyphs">フィルター</text></svg>
<svg style="left:825px;top:295px" width="5" height="6" viewBox="0 0 10 12" stroke="#6a6a6a" stroke-width="1.600"><path d="M1.500 0v12M5 0v12M8.500 0v12"/></svg>
<svg class="j" style="left:834.50px;top:294.45px;color:#222" width="38.00" height="7.10" viewBox="0 -176 1070.4 200" role="img" aria-label="凡例 (系列)"><text x="0" y="0" font-size="216" textLength="1070.4" lengthAdjust="spacingAndGlyphs">凡例 (系列)</text></svg>
<svg class="j" style="left:826.50px;top:308.75px;color:#222" width="14.40" height="7.30" viewBox="0 -176 394.5 200" role="img" aria-label="属性"><text x="0" y="0" font-size="197" textLength="394.5" lengthAdjust="spacingAndGlyphs">属性</text></svg>
<svg style="left:907.30px;top:311.30px" width="4" height="2.700" viewBox="0 0 8 5" fill="none" stroke="#3c3c3c" stroke-width="1.900"><path d="M1 1l3 3 3-3"/></svg>
<svg style="left:725px;top:373.8px" width="5.600" height="5.600" viewBox="0 0 11 11" stroke="#6a6a6a" stroke-width="1.600"><path d="M0 1.500h11M0 5.500h11M0 9.500h11"/></svg>
<svg class="j" style="left:736.50px;top:373.15px;color:#222" width="45.00" height="7.10" viewBox="0 -176 1267.6 200" role="img" aria-label="軸 (分類項目)"><text x="0" y="0" font-size="213" textLength="1267.6" lengthAdjust="spacingAndGlyphs">軸 (分類項目)</text></svg>
<div class="t" style="top:372.00px;font-size:7.50px;line-height:9.00px;color:#555;left:824.40px;">Σ</div>
<svg class="j" style="left:834.50px;top:373.15px;color:#222" width="7.20" height="7.10" viewBox="0 -176 202.8 200" role="img" aria-label="値"><text x="0" y="0" font-size="203" textLength="202.8" lengthAdjust="spacingAndGlyphs">値</text></svg>
<svg class="j" style="left:728.00px;top:388.80px;color:#222" width="14.30" height="7.20" viewBox="0 -176 397.2 200" role="img" aria-label="年度"><text x="0" y="0" font-size="199" textLength="397.2" lengthAdjust="spacingAndGlyphs">年度</text></svg>
<svg style="left:806.60px;top:391.20px" width="4" height="2.700" viewBox="0 0 8 5" fill="none" stroke="#3c3c3c" stroke-width="1.900"><path d="M1 1l3 3 3-3"/></svg>
<svg class="j" style="left:728.00px;top:402.20px;color:#222" width="50.00" height="7.20" viewBox="0 -176 1388.9 200" role="img" aria-label="code_都道府県"><text x="0" y="0" font-size="203" textLength="1388.9" lengthAdjust="spacingAndGlyphs">code_都道府県</text></svg>
<svg style="left:806.60px;top:404.60px" width="4" height="2.700" viewBox="0 0 8 5" fill="none" stroke="#3c3c3c" stroke-width="1.900"><path d="M1 1l3 3 3-3"/></svg>
<svg class="j" style="left:826.30px;top:388.80px;color:#222" width="80.50" height="7.20" viewBox="0 -176 2236.1 200" role="img" aria-label="合計 / 支給対象児童数..."><text x="0" y="0" font-size="207" textLength="2236.1" lengthAdjust="spacingAndGlyphs">合計 / 支給対象児童数...</text></svg>
<svg style="left:908.20px;top:391.20px" width="4" height="2.700" viewBox="0 0 8 5" fill="none" stroke="#3c3c3c" stroke-width="1.900"><path d="M1 1l3 3 3-3"/></svg>
<svg class="j" style="left:736.30px;top:460.30px;color:#222" width="78.70" height="7.00" viewBox="0 -176 2248.6 200" role="img" aria-label="レイアウトの更新を保留する"><text x="0" y="0" font-size="198" textLength="2248.6" lengthAdjust="spacingAndGlyphs">レイアウトの更新を保留する</text></svg>
<svg class="j" style="left:900.00px;top:460.70px;color:#b0b0b0" width="12.80" height="6.60" viewBox="0 -176 387.9 200" role="img" aria-label="更新"><text x="0" y="0" font-size="194" textLength="387.9" lengthAdjust="spacingAndGlyphs">更新</text></svg>
</div>
</body></html>
